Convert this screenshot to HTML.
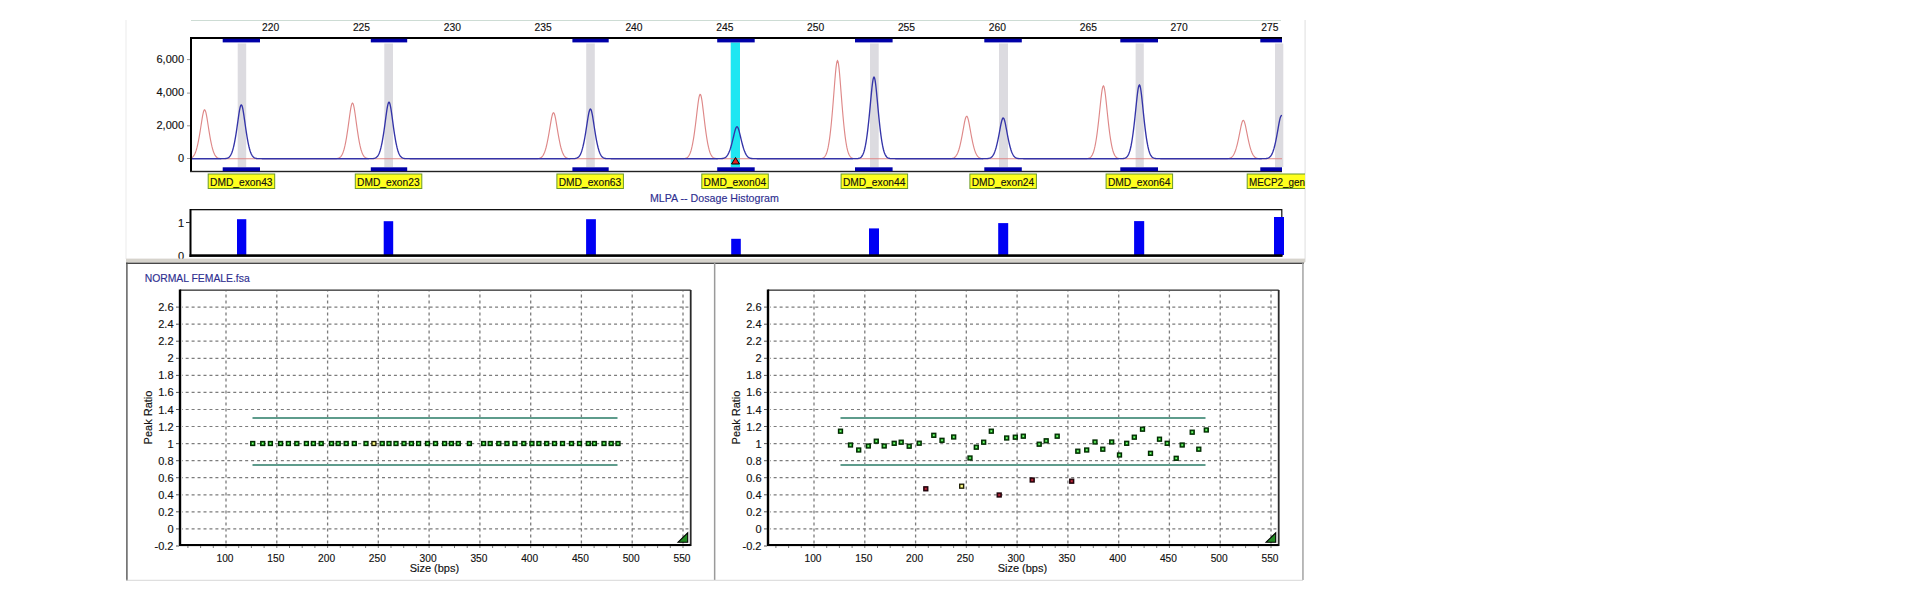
<!DOCTYPE html>
<html><head><meta charset="utf-8"><style>
html,body{margin:0;padding:0;background:#fff;width:1920px;height:600px;overflow:hidden;font-family:"Liberation Sans",sans-serif;}
svg{position:absolute;left:0;top:0;display:block}
</style></head><body>
<svg width="1920" height="600" viewBox="0 0 1920 600">
<rect x="125.5" y="20" width="1" height="239" fill="#ececec"/>
<rect x="1304.5" y="20" width="1.2" height="242" fill="#e4e4e4"/>
<rect x="191" y="20" width="1090" height="1" fill="#cddcd4"/>
<rect x="237.7" y="43.5" width="8.50" height="123.5" fill="#dcdbe0"/>
<rect x="384.3" y="43.5" width="8.70" height="123.5" fill="#dcdbe0"/>
<rect x="586.2" y="43.5" width="8.60" height="123.5" fill="#dcdbe0"/>
<rect x="870" y="43.5" width="8.70" height="123.5" fill="#dcdbe0"/>
<rect x="999" y="43.5" width="9.00" height="123.5" fill="#dcdbe0"/>
<rect x="1135.6" y="43.5" width="8.20" height="123.5" fill="#dcdbe0"/>
<rect x="1275" y="43.5" width="8.30" height="123.5" fill="#dcdbe0"/>
<rect x="730.7" y="42.4" width="9.3" height="124.8" fill="#1fe6f2"/>
<clipPath id="cp1"><rect x="191" y="39" width="1091" height="131"/></clipPath>
<g clip-path="url(#cp1)">
<path d="M191.0,158.07 L191.5,157.85 L192.0,157.56 L192.5,157.19 L193.0,156.72 L193.5,156.14 L194.0,155.43 L194.5,154.57 L195.0,153.54 L195.5,152.32 L196.0,150.90 L196.5,149.28 L197.0,147.44 L197.5,145.38 L198.0,143.11 L198.5,140.64 L199.0,137.97 L199.5,135.13 L200.0,132.13 L200.5,129.00 L201.0,125.78 L201.5,122.54 L202.0,119.38 L202.5,116.43 L203.0,113.84 L203.5,111.78 L204.0,110.41 L204.5,109.82 L205.0,110.07 L205.5,111.14 L206.0,112.95 L206.5,115.34 L207.0,118.17 L207.5,121.26 L208.0,124.48 L208.5,127.72 L209.0,130.89 L209.5,133.95 L210.0,136.86 L210.5,139.60 L211.0,142.15 L211.5,144.50 L212.0,146.64 L212.5,148.57 L213.0,150.28 L213.5,151.78 L214.0,153.07 L214.5,154.18 L215.0,155.11 L215.5,155.88 L216.0,156.51 L216.5,157.01 L217.0,157.42 L217.5,157.74 L218.0,157.99 L218.5,158.18 L219.0,158.32 L219.5,158.43 L220.0,158.51 L220.5,158.56 L221.0,158.61 L221.5,158.64 L222.0,158.66 L222.5,158.67 L223.0,158.68 L223.5,158.69 L224.0,158.69 L224.5,158.69 L225.0,158.70 L225.5,158.70 L226.0,158.70 L226.5,158.70 L227.0,158.70 L227.5,158.70 L228.0,158.70 L228.5,158.70 L229.0,158.70 L229.5,158.70 L230.0,158.70 L230.5,158.70 L231.0,158.70 L231.5,158.70 L232.0,158.70 L232.5,158.70 L233.0,158.70 L233.5,158.70 L234.0,158.70 L234.5,158.70 L235.0,158.70 L235.5,158.70 L236.0,158.70 L236.5,158.70 L237.0,158.70 L237.5,158.70 L238.0,158.70 L238.5,158.70 L239.0,158.70 L239.5,158.70 L240.0,158.70 L240.5,158.70 L241.0,158.70 L241.5,158.70 L242.0,158.70 L242.5,158.70 L243.0,158.70 L243.5,158.70 L244.0,158.70 L244.5,158.70 L245.0,158.70 L245.5,158.70 L246.0,158.70 L246.5,158.70 L247.0,158.70 L247.5,158.70 L248.0,158.70 L248.5,158.70 L249.0,158.70 L249.5,158.70 L250.0,158.70 L250.5,158.70 L251.0,158.70 L251.5,158.70 L252.0,158.70 L252.5,158.70 L253.0,158.70 L253.5,158.70 L254.0,158.70 L254.5,158.70 L255.0,158.70 L255.5,158.70 L256.0,158.70 L256.5,158.70 L257.0,158.70 L257.5,158.70 L258.0,158.70 L258.5,158.70 L259.0,158.70 L259.5,158.70 L260.0,158.70 L260.5,158.70 L261.0,158.70 L261.5,158.70 L262.0,158.70 L262.5,158.70 L263.0,158.70 L263.5,158.70 L264.0,158.70 L264.5,158.70 L265.0,158.70 L265.5,158.70 L266.0,158.70 L266.5,158.70 L267.0,158.70 L267.5,158.70 L268.0,158.70 L268.5,158.70 L269.0,158.70 L269.5,158.70 L270.0,158.70 L270.5,158.70 L271.0,158.70 L271.5,158.70 L272.0,158.70 L272.5,158.70 L273.0,158.70 L273.5,158.70 L274.0,158.70 L274.5,158.70 L275.0,158.70 L275.5,158.70 L276.0,158.70 L276.5,158.70 L277.0,158.70 L277.5,158.70 L278.0,158.70 L278.5,158.70 L279.0,158.70 L279.5,158.70 L280.0,158.70 L280.5,158.70 L281.0,158.70 L281.5,158.70 L282.0,158.70 L282.5,158.70 L283.0,158.70 L283.5,158.70 L284.0,158.70 L284.5,158.70 L285.0,158.70 L285.5,158.70 L286.0,158.70 L286.5,158.70 L287.0,158.70 L287.5,158.70 L288.0,158.70 L288.5,158.70 L289.0,158.70 L289.5,158.70 L290.0,158.70 L290.5,158.70 L291.0,158.70 L291.5,158.70 L292.0,158.70 L292.5,158.70 L293.0,158.70 L293.5,158.70 L294.0,158.70 L294.5,158.70 L295.0,158.70 L295.5,158.70 L296.0,158.70 L296.5,158.70 L297.0,158.70 L297.5,158.70 L298.0,158.70 L298.5,158.70 L299.0,158.70 L299.5,158.70 L300.0,158.70 L300.5,158.70 L301.0,158.70 L301.5,158.70 L302.0,158.70 L302.5,158.70 L303.0,158.70 L303.5,158.70 L304.0,158.70 L304.5,158.70 L305.0,158.70 L305.5,158.70 L306.0,158.70 L306.5,158.70 L307.0,158.70 L307.5,158.70 L308.0,158.70 L308.5,158.70 L309.0,158.70 L309.5,158.70 L310.0,158.70 L310.5,158.70 L311.0,158.70 L311.5,158.70 L312.0,158.70 L312.5,158.70 L313.0,158.70 L313.5,158.70 L314.0,158.70 L314.5,158.70 L315.0,158.70 L315.5,158.70 L316.0,158.70 L316.5,158.70 L317.0,158.70 L317.5,158.70 L318.0,158.70 L318.5,158.70 L319.0,158.70 L319.5,158.70 L320.0,158.70 L320.5,158.70 L321.0,158.70 L321.5,158.70 L322.0,158.70 L322.5,158.70 L323.0,158.70 L323.5,158.70 L324.0,158.70 L324.5,158.70 L325.0,158.70 L325.5,158.70 L326.0,158.70 L326.5,158.70 L327.0,158.70 L327.5,158.70 L328.0,158.70 L328.5,158.70 L329.0,158.70 L329.5,158.70 L330.0,158.70 L330.5,158.70 L331.0,158.70 L331.5,158.70 L332.0,158.70 L332.5,158.69 L333.0,158.69 L333.5,158.69 L334.0,158.68 L334.5,158.67 L335.0,158.65 L335.5,158.63 L336.0,158.60 L336.5,158.56 L337.0,158.49 L337.5,158.41 L338.0,158.29 L338.5,158.14 L339.0,157.93 L339.5,157.67 L340.0,157.32 L340.5,156.88 L341.0,156.33 L341.5,155.64 L342.0,154.80 L342.5,153.78 L343.0,152.56 L343.5,151.13 L344.0,149.47 L344.5,147.57 L345.0,145.42 L345.5,143.03 L346.0,140.40 L346.5,137.54 L347.0,134.46 L347.5,131.18 L348.0,127.73 L348.5,124.14 L349.0,120.46 L349.5,116.78 L350.0,113.22 L350.5,109.93 L351.0,107.08 L351.5,104.88 L352.0,103.48 L352.5,103.00 L353.0,103.48 L353.5,104.88 L354.0,107.08 L354.5,109.93 L355.0,113.22 L355.5,116.78 L356.0,120.46 L356.5,124.14 L357.0,127.73 L357.5,131.18 L358.0,134.46 L358.5,137.54 L359.0,140.40 L359.5,143.03 L360.0,145.42 L360.5,147.57 L361.0,149.47 L361.5,151.13 L362.0,152.56 L362.5,153.78 L363.0,154.80 L363.5,155.64 L364.0,156.33 L364.5,156.88 L365.0,157.32 L365.5,157.67 L366.0,157.93 L366.5,158.14 L367.0,158.29 L367.5,158.41 L368.0,158.49 L368.5,158.56 L369.0,158.60 L369.5,158.63 L370.0,158.65 L370.5,158.67 L371.0,158.68 L371.5,158.69 L372.0,158.69 L372.5,158.69 L373.0,158.70 L373.5,158.70 L374.0,158.70 L374.5,158.70 L375.0,158.70 L375.5,158.70 L376.0,158.70 L376.5,158.70 L377.0,158.70 L377.5,158.70 L378.0,158.70 L378.5,158.70 L379.0,158.70 L379.5,158.70 L380.0,158.70 L380.5,158.70 L381.0,158.70 L381.5,158.70 L382.0,158.70 L382.5,158.70 L383.0,158.70 L383.5,158.70 L384.0,158.70 L384.5,158.70 L385.0,158.70 L385.5,158.70 L386.0,158.70 L386.5,158.70 L387.0,158.70 L387.5,158.70 L388.0,158.70 L388.5,158.70 L389.0,158.70 L389.5,158.70 L390.0,158.70 L390.5,158.70 L391.0,158.70 L391.5,158.70 L392.0,158.70 L392.5,158.70 L393.0,158.70 L393.5,158.70 L394.0,158.70 L394.5,158.70 L395.0,158.70 L395.5,158.70 L396.0,158.70 L396.5,158.70 L397.0,158.70 L397.5,158.70 L398.0,158.70 L398.5,158.70 L399.0,158.70 L399.5,158.70 L400.0,158.70 L400.5,158.70 L401.0,158.70 L401.5,158.70 L402.0,158.70 L402.5,158.70 L403.0,158.70 L403.5,158.70 L404.0,158.70 L404.5,158.70 L405.0,158.70 L405.5,158.70 L406.0,158.70 L406.5,158.70 L407.0,158.70 L407.5,158.70 L408.0,158.70 L408.5,158.70 L409.0,158.70 L409.5,158.70 L410.0,158.70 L410.5,158.70 L411.0,158.70 L411.5,158.70 L412.0,158.70 L412.5,158.70 L413.0,158.70 L413.5,158.70 L414.0,158.70 L414.5,158.70 L415.0,158.70 L415.5,158.70 L416.0,158.70 L416.5,158.70 L417.0,158.70 L417.5,158.70 L418.0,158.70 L418.5,158.70 L419.0,158.70 L419.5,158.70 L420.0,158.70 L420.5,158.70 L421.0,158.70 L421.5,158.70 L422.0,158.70 L422.5,158.70 L423.0,158.70 L423.5,158.70 L424.0,158.70 L424.5,158.70 L425.0,158.70 L425.5,158.70 L426.0,158.70 L426.5,158.70 L427.0,158.70 L427.5,158.70 L428.0,158.70 L428.5,158.70 L429.0,158.70 L429.5,158.70 L430.0,158.70 L430.5,158.70 L431.0,158.70 L431.5,158.70 L432.0,158.70 L432.5,158.70 L433.0,158.70 L433.5,158.70 L434.0,158.70 L434.5,158.70 L435.0,158.70 L435.5,158.70 L436.0,158.70 L436.5,158.70 L437.0,158.70 L437.5,158.70 L438.0,158.70 L438.5,158.70 L439.0,158.70 L439.5,158.70 L440.0,158.70 L440.5,158.70 L441.0,158.70 L441.5,158.70 L442.0,158.70 L442.5,158.70 L443.0,158.70 L443.5,158.70 L444.0,158.70 L444.5,158.70 L445.0,158.70 L445.5,158.70 L446.0,158.70 L446.5,158.70 L447.0,158.70 L447.5,158.70 L448.0,158.70 L448.5,158.70 L449.0,158.70 L449.5,158.70 L450.0,158.70 L450.5,158.70 L451.0,158.70 L451.5,158.70 L452.0,158.70 L452.5,158.70 L453.0,158.70 L453.5,158.70 L454.0,158.70 L454.5,158.70 L455.0,158.70 L455.5,158.70 L456.0,158.70 L456.5,158.70 L457.0,158.70 L457.5,158.70 L458.0,158.70 L458.5,158.70 L459.0,158.70 L459.5,158.70 L460.0,158.70 L460.5,158.70 L461.0,158.70 L461.5,158.70 L462.0,158.70 L462.5,158.70 L463.0,158.70 L463.5,158.70 L464.0,158.70 L464.5,158.70 L465.0,158.70 L465.5,158.70 L466.0,158.70 L466.5,158.70 L467.0,158.70 L467.5,158.70 L468.0,158.70 L468.5,158.70 L469.0,158.70 L469.5,158.70 L470.0,158.70 L470.5,158.70 L471.0,158.70 L471.5,158.70 L472.0,158.70 L472.5,158.70 L473.0,158.70 L473.5,158.70 L474.0,158.70 L474.5,158.70 L475.0,158.70 L475.5,158.70 L476.0,158.70 L476.5,158.70 L477.0,158.70 L477.5,158.70 L478.0,158.70 L478.5,158.70 L479.0,158.70 L479.5,158.70 L480.0,158.70 L480.5,158.70 L481.0,158.70 L481.5,158.70 L482.0,158.70 L482.5,158.70 L483.0,158.70 L483.5,158.70 L484.0,158.70 L484.5,158.70 L485.0,158.70 L485.5,158.70 L486.0,158.70 L486.5,158.70 L487.0,158.70 L487.5,158.70 L488.0,158.70 L488.5,158.70 L489.0,158.70 L489.5,158.70 L490.0,158.70 L490.5,158.70 L491.0,158.70 L491.5,158.70 L492.0,158.70 L492.5,158.70 L493.0,158.70 L493.5,158.70 L494.0,158.70 L494.5,158.70 L495.0,158.70 L495.5,158.70 L496.0,158.70 L496.5,158.70 L497.0,158.70 L497.5,158.70 L498.0,158.70 L498.5,158.70 L499.0,158.70 L499.5,158.70 L500.0,158.70 L500.5,158.70 L501.0,158.70 L501.5,158.70 L502.0,158.70 L502.5,158.70 L503.0,158.70 L503.5,158.70 L504.0,158.70 L504.5,158.70 L505.0,158.70 L505.5,158.70 L506.0,158.70 L506.5,158.70 L507.0,158.70 L507.5,158.70 L508.0,158.70 L508.5,158.70 L509.0,158.70 L509.5,158.70 L510.0,158.70 L510.5,158.70 L511.0,158.70 L511.5,158.70 L512.0,158.70 L512.5,158.70 L513.0,158.70 L513.5,158.70 L514.0,158.70 L514.5,158.70 L515.0,158.70 L515.5,158.70 L516.0,158.70 L516.5,158.70 L517.0,158.70 L517.5,158.70 L518.0,158.70 L518.5,158.70 L519.0,158.70 L519.5,158.70 L520.0,158.70 L520.5,158.70 L521.0,158.70 L521.5,158.70 L522.0,158.70 L522.5,158.70 L523.0,158.70 L523.5,158.70 L524.0,158.70 L524.5,158.70 L525.0,158.70 L525.5,158.70 L526.0,158.70 L526.5,158.70 L527.0,158.70 L527.5,158.70 L528.0,158.70 L528.5,158.70 L529.0,158.70 L529.5,158.70 L530.0,158.70 L530.5,158.70 L531.0,158.70 L531.5,158.70 L532.0,158.70 L532.5,158.70 L533.0,158.70 L533.5,158.70 L534.0,158.69 L534.5,158.69 L535.0,158.68 L535.5,158.67 L536.0,158.66 L536.5,158.64 L537.0,158.62 L537.5,158.58 L538.0,158.53 L538.5,158.46 L539.0,158.36 L539.5,158.24 L540.0,158.07 L540.5,157.85 L541.0,157.56 L541.5,157.20 L542.0,156.74 L542.5,156.17 L543.0,155.48 L543.5,154.63 L544.0,153.63 L544.5,152.45 L545.0,151.08 L545.5,149.51 L546.0,147.73 L546.5,145.76 L547.0,143.59 L547.5,141.22 L548.0,138.68 L548.5,135.97 L549.0,133.12 L549.5,130.16 L550.0,127.12 L550.5,124.08 L551.0,121.14 L551.5,118.42 L552.0,116.07 L552.5,114.25 L553.0,113.10 L553.5,112.70 L554.0,113.10 L554.5,114.25 L555.0,116.07 L555.5,118.42 L556.0,121.14 L556.5,124.08 L557.0,127.12 L557.5,130.16 L558.0,133.12 L558.5,135.97 L559.0,138.68 L559.5,141.22 L560.0,143.59 L560.5,145.76 L561.0,147.73 L561.5,149.51 L562.0,151.08 L562.5,152.45 L563.0,153.63 L563.5,154.63 L564.0,155.48 L564.5,156.17 L565.0,156.74 L565.5,157.20 L566.0,157.56 L566.5,157.85 L567.0,158.07 L567.5,158.24 L568.0,158.36 L568.5,158.46 L569.0,158.53 L569.5,158.58 L570.0,158.62 L570.5,158.64 L571.0,158.66 L571.5,158.67 L572.0,158.68 L572.5,158.69 L573.0,158.69 L573.5,158.70 L574.0,158.70 L574.5,158.70 L575.0,158.70 L575.5,158.70 L576.0,158.70 L576.5,158.70 L577.0,158.70 L577.5,158.70 L578.0,158.70 L578.5,158.70 L579.0,158.70 L579.5,158.70 L580.0,158.70 L580.5,158.70 L581.0,158.70 L581.5,158.70 L582.0,158.70 L582.5,158.70 L583.0,158.70 L583.5,158.70 L584.0,158.70 L584.5,158.70 L585.0,158.70 L585.5,158.70 L586.0,158.70 L586.5,158.70 L587.0,158.70 L587.5,158.70 L588.0,158.70 L588.5,158.70 L589.0,158.70 L589.5,158.70 L590.0,158.70 L590.5,158.70 L591.0,158.70 L591.5,158.70 L592.0,158.70 L592.5,158.70 L593.0,158.70 L593.5,158.70 L594.0,158.70 L594.5,158.70 L595.0,158.70 L595.5,158.70 L596.0,158.70 L596.5,158.70 L597.0,158.70 L597.5,158.70 L598.0,158.70 L598.5,158.70 L599.0,158.70 L599.5,158.70 L600.0,158.70 L600.5,158.70 L601.0,158.70 L601.5,158.70 L602.0,158.70 L602.5,158.70 L603.0,158.70 L603.5,158.70 L604.0,158.70 L604.5,158.70 L605.0,158.70 L605.5,158.70 L606.0,158.70 L606.5,158.70 L607.0,158.70 L607.5,158.70 L608.0,158.70 L608.5,158.70 L609.0,158.70 L609.5,158.70 L610.0,158.70 L610.5,158.70 L611.0,158.70 L611.5,158.70 L612.0,158.70 L612.5,158.70 L613.0,158.70 L613.5,158.70 L614.0,158.70 L614.5,158.70 L615.0,158.70 L615.5,158.70 L616.0,158.70 L616.5,158.70 L617.0,158.70 L617.5,158.70 L618.0,158.70 L618.5,158.70 L619.0,158.70 L619.5,158.70 L620.0,158.70 L620.5,158.70 L621.0,158.70 L621.5,158.70 L622.0,158.70 L622.5,158.70 L623.0,158.70 L623.5,158.70 L624.0,158.70 L624.5,158.70 L625.0,158.70 L625.5,158.70 L626.0,158.70 L626.5,158.70 L627.0,158.70 L627.5,158.70 L628.0,158.70 L628.5,158.70 L629.0,158.70 L629.5,158.70 L630.0,158.70 L630.5,158.70 L631.0,158.70 L631.5,158.70 L632.0,158.70 L632.5,158.70 L633.0,158.70 L633.5,158.70 L634.0,158.70 L634.5,158.70 L635.0,158.70 L635.5,158.70 L636.0,158.70 L636.5,158.70 L637.0,158.70 L637.5,158.70 L638.0,158.70 L638.5,158.70 L639.0,158.70 L639.5,158.70 L640.0,158.70 L640.5,158.70 L641.0,158.70 L641.5,158.70 L642.0,158.70 L642.5,158.70 L643.0,158.70 L643.5,158.70 L644.0,158.70 L644.5,158.70 L645.0,158.70 L645.5,158.70 L646.0,158.70 L646.5,158.70 L647.0,158.70 L647.5,158.70 L648.0,158.70 L648.5,158.70 L649.0,158.70 L649.5,158.70 L650.0,158.70 L650.5,158.70 L651.0,158.70 L651.5,158.70 L652.0,158.70 L652.5,158.70 L653.0,158.70 L653.5,158.70 L654.0,158.70 L654.5,158.70 L655.0,158.70 L655.5,158.70 L656.0,158.70 L656.5,158.70 L657.0,158.70 L657.5,158.70 L658.0,158.70 L658.5,158.70 L659.0,158.70 L659.5,158.70 L660.0,158.70 L660.5,158.70 L661.0,158.70 L661.5,158.70 L662.0,158.70 L662.5,158.70 L663.0,158.70 L663.5,158.70 L664.0,158.70 L664.5,158.70 L665.0,158.70 L665.5,158.70 L666.0,158.70 L666.5,158.70 L667.0,158.70 L667.5,158.70 L668.0,158.70 L668.5,158.70 L669.0,158.70 L669.5,158.70 L670.0,158.70 L670.5,158.70 L671.0,158.70 L671.5,158.70 L672.0,158.70 L672.5,158.70 L673.0,158.70 L673.5,158.70 L674.0,158.70 L674.5,158.70 L675.0,158.70 L675.5,158.70 L676.0,158.70 L676.5,158.70 L677.0,158.70 L677.5,158.70 L678.0,158.70 L678.5,158.70 L679.0,158.70 L679.5,158.70 L680.0,158.69 L680.5,158.69 L681.0,158.69 L681.5,158.68 L682.0,158.67 L682.5,158.65 L683.0,158.63 L683.5,158.60 L684.0,158.56 L684.5,158.49 L685.0,158.41 L685.5,158.29 L686.0,158.13 L686.5,157.92 L687.0,157.64 L687.5,157.28 L688.0,156.82 L688.5,156.23 L689.0,155.50 L689.5,154.60 L690.0,153.50 L690.5,152.19 L691.0,150.64 L691.5,148.83 L692.0,146.74 L692.5,144.37 L693.0,141.72 L693.5,138.79 L694.0,135.59 L694.5,132.13 L695.0,128.43 L695.5,124.51 L696.0,120.42 L696.5,116.20 L697.0,111.93 L697.5,107.74 L698.0,103.78 L698.5,100.26 L699.0,97.39 L699.5,95.38 L700.0,94.39 L700.5,94.50 L701.0,95.71 L701.5,97.90 L702.0,100.92 L702.5,104.54 L703.0,108.56 L703.5,112.78 L704.0,117.05 L704.5,121.25 L705.0,125.31 L705.5,129.18 L706.0,132.84 L706.5,136.25 L707.0,139.40 L707.5,142.28 L708.0,144.87 L708.5,147.18 L709.0,149.21 L709.5,150.97 L710.0,152.47 L710.5,153.74 L711.0,154.79 L711.5,155.66 L712.0,156.36 L712.5,156.92 L713.0,157.36 L713.5,157.70 L714.0,157.97 L714.5,158.17 L715.0,158.32 L715.5,158.43 L716.0,158.51 L716.5,158.57 L717.0,158.61 L717.5,158.64 L718.0,158.66 L718.5,158.67 L719.0,158.68 L719.5,158.69 L720.0,158.69 L720.5,158.70 L721.0,158.70 L721.5,158.70 L722.0,158.70 L722.5,158.70 L723.0,158.70 L723.5,158.70 L724.0,158.70 L724.5,158.70 L725.0,158.70 L725.5,158.70 L726.0,158.70 L726.5,158.70 L727.0,158.70 L727.5,158.70 L728.0,158.70 L728.5,158.70 L729.0,158.70 L729.5,158.70 L730.0,158.70 L730.5,158.70 L731.0,158.70 L731.5,158.70 L732.0,158.70 L732.5,158.70 L733.0,158.70 L733.5,158.70 L734.0,158.70 L734.5,158.70 L735.0,158.70 L735.5,158.70 L736.0,158.70 L736.5,158.70 L737.0,158.70 L737.5,158.70 L738.0,158.70 L738.5,158.70 L739.0,158.70 L739.5,158.70 L740.0,158.70 L740.5,158.70 L741.0,158.70 L741.5,158.70 L742.0,158.70 L742.5,158.70 L743.0,158.70 L743.5,158.70 L744.0,158.70 L744.5,158.70 L745.0,158.70 L745.5,158.70 L746.0,158.70 L746.5,158.70 L747.0,158.70 L747.5,158.70 L748.0,158.70 L748.5,158.70 L749.0,158.70 L749.5,158.70 L750.0,158.70 L750.5,158.70 L751.0,158.70 L751.5,158.70 L752.0,158.70 L752.5,158.70 L753.0,158.70 L753.5,158.70 L754.0,158.70 L754.5,158.70 L755.0,158.70 L755.5,158.70 L756.0,158.70 L756.5,158.70 L757.0,158.70 L757.5,158.70 L758.0,158.70 L758.5,158.70 L759.0,158.70 L759.5,158.70 L760.0,158.70 L760.5,158.70 L761.0,158.70 L761.5,158.70 L762.0,158.70 L762.5,158.70 L763.0,158.70 L763.5,158.70 L764.0,158.70 L764.5,158.70 L765.0,158.70 L765.5,158.70 L766.0,158.70 L766.5,158.70 L767.0,158.70 L767.5,158.70 L768.0,158.70 L768.5,158.70 L769.0,158.70 L769.5,158.70 L770.0,158.70 L770.5,158.70 L771.0,158.70 L771.5,158.70 L772.0,158.70 L772.5,158.70 L773.0,158.70 L773.5,158.70 L774.0,158.70 L774.5,158.70 L775.0,158.70 L775.5,158.70 L776.0,158.70 L776.5,158.70 L777.0,158.70 L777.5,158.70 L778.0,158.70 L778.5,158.70 L779.0,158.70 L779.5,158.70 L780.0,158.70 L780.5,158.70 L781.0,158.70 L781.5,158.70 L782.0,158.70 L782.5,158.70 L783.0,158.70 L783.5,158.70 L784.0,158.70 L784.5,158.70 L785.0,158.70 L785.5,158.70 L786.0,158.70 L786.5,158.70 L787.0,158.70 L787.5,158.70 L788.0,158.70 L788.5,158.70 L789.0,158.70 L789.5,158.70 L790.0,158.70 L790.5,158.70 L791.0,158.70 L791.5,158.70 L792.0,158.70 L792.5,158.70 L793.0,158.70 L793.5,158.70 L794.0,158.70 L794.5,158.70 L795.0,158.70 L795.5,158.70 L796.0,158.70 L796.5,158.70 L797.0,158.70 L797.5,158.70 L798.0,158.70 L798.5,158.70 L799.0,158.70 L799.5,158.70 L800.0,158.70 L800.5,158.70 L801.0,158.70 L801.5,158.70 L802.0,158.70 L802.5,158.70 L803.0,158.70 L803.5,158.70 L804.0,158.70 L804.5,158.70 L805.0,158.70 L805.5,158.70 L806.0,158.70 L806.5,158.70 L807.0,158.70 L807.5,158.70 L808.0,158.70 L808.5,158.70 L809.0,158.70 L809.5,158.70 L810.0,158.70 L810.5,158.70 L811.0,158.70 L811.5,158.70 L812.0,158.70 L812.5,158.70 L813.0,158.70 L813.5,158.70 L814.0,158.70 L814.5,158.70 L815.0,158.70 L815.5,158.70 L816.0,158.70 L816.5,158.70 L817.0,158.69 L817.5,158.69 L818.0,158.68 L818.5,158.68 L819.0,158.66 L819.5,158.65 L820.0,158.62 L820.5,158.58 L821.0,158.52 L821.5,158.45 L822.0,158.34 L822.5,158.19 L823.0,157.99 L823.5,157.71 L824.0,157.35 L824.5,156.88 L825.0,156.28 L825.5,155.50 L826.0,154.53 L826.5,153.31 L827.0,151.83 L827.5,150.04 L828.0,147.90 L828.5,145.38 L829.0,142.46 L829.5,139.11 L830.0,135.34 L830.5,131.13 L831.0,126.50 L831.5,121.47 L832.0,116.05 L832.5,110.29 L833.0,104.21 L833.5,97.89 L834.0,91.42 L834.5,84.95 L835.0,78.68 L835.5,72.89 L836.0,67.88 L836.5,64.01 L837.0,61.54 L837.5,60.70 L838.0,61.54 L838.5,64.01 L839.0,67.88 L839.5,72.89 L840.0,78.68 L840.5,84.95 L841.0,91.42 L841.5,97.89 L842.0,104.21 L842.5,110.29 L843.0,116.05 L843.5,121.47 L844.0,126.50 L844.5,131.13 L845.0,135.34 L845.5,139.11 L846.0,142.46 L846.5,145.38 L847.0,147.90 L847.5,150.04 L848.0,151.83 L848.5,153.31 L849.0,154.53 L849.5,155.50 L850.0,156.28 L850.5,156.88 L851.0,157.35 L851.5,157.71 L852.0,157.99 L852.5,158.19 L853.0,158.34 L853.5,158.45 L854.0,158.52 L854.5,158.58 L855.0,158.62 L855.5,158.65 L856.0,158.66 L856.5,158.68 L857.0,158.68 L857.5,158.69 L858.0,158.69 L858.5,158.70 L859.0,158.70 L859.5,158.70 L860.0,158.70 L860.5,158.70 L861.0,158.70 L861.5,158.70 L862.0,158.70 L862.5,158.70 L863.0,158.70 L863.5,158.70 L864.0,158.70 L864.5,158.70 L865.0,158.70 L865.5,158.70 L866.0,158.70 L866.5,158.70 L867.0,158.70 L867.5,158.70 L868.0,158.70 L868.5,158.70 L869.0,158.70 L869.5,158.70 L870.0,158.70 L870.5,158.70 L871.0,158.70 L871.5,158.70 L872.0,158.70 L872.5,158.70 L873.0,158.70 L873.5,158.70 L874.0,158.70 L874.5,158.70 L875.0,158.70 L875.5,158.70 L876.0,158.70 L876.5,158.70 L877.0,158.70 L877.5,158.70 L878.0,158.70 L878.5,158.70 L879.0,158.70 L879.5,158.70 L880.0,158.70 L880.5,158.70 L881.0,158.70 L881.5,158.70 L882.0,158.70 L882.5,158.70 L883.0,158.70 L883.5,158.70 L884.0,158.70 L884.5,158.70 L885.0,158.70 L885.5,158.70 L886.0,158.70 L886.5,158.70 L887.0,158.70 L887.5,158.70 L888.0,158.70 L888.5,158.70 L889.0,158.70 L889.5,158.70 L890.0,158.70 L890.5,158.70 L891.0,158.70 L891.5,158.70 L892.0,158.70 L892.5,158.70 L893.0,158.70 L893.5,158.70 L894.0,158.70 L894.5,158.70 L895.0,158.70 L895.5,158.70 L896.0,158.70 L896.5,158.70 L897.0,158.70 L897.5,158.70 L898.0,158.70 L898.5,158.70 L899.0,158.70 L899.5,158.70 L900.0,158.70 L900.5,158.70 L901.0,158.70 L901.5,158.70 L902.0,158.70 L902.5,158.70 L903.0,158.70 L903.5,158.70 L904.0,158.70 L904.5,158.70 L905.0,158.70 L905.5,158.70 L906.0,158.70 L906.5,158.70 L907.0,158.70 L907.5,158.70 L908.0,158.70 L908.5,158.70 L909.0,158.70 L909.5,158.70 L910.0,158.70 L910.5,158.70 L911.0,158.70 L911.5,158.70 L912.0,158.70 L912.5,158.70 L913.0,158.70 L913.5,158.70 L914.0,158.70 L914.5,158.70 L915.0,158.70 L915.5,158.70 L916.0,158.70 L916.5,158.70 L917.0,158.70 L917.5,158.70 L918.0,158.70 L918.5,158.70 L919.0,158.70 L919.5,158.70 L920.0,158.70 L920.5,158.70 L921.0,158.70 L921.5,158.70 L922.0,158.70 L922.5,158.70 L923.0,158.70 L923.5,158.70 L924.0,158.70 L924.5,158.70 L925.0,158.70 L925.5,158.70 L926.0,158.70 L926.5,158.70 L927.0,158.70 L927.5,158.70 L928.0,158.70 L928.5,158.70 L929.0,158.70 L929.5,158.70 L930.0,158.70 L930.5,158.70 L931.0,158.70 L931.5,158.70 L932.0,158.70 L932.5,158.70 L933.0,158.70 L933.5,158.70 L934.0,158.70 L934.5,158.70 L935.0,158.70 L935.5,158.70 L936.0,158.70 L936.5,158.70 L937.0,158.70 L937.5,158.70 L938.0,158.70 L938.5,158.70 L939.0,158.70 L939.5,158.70 L940.0,158.70 L940.5,158.70 L941.0,158.70 L941.5,158.70 L942.0,158.70 L942.5,158.70 L943.0,158.70 L943.5,158.70 L944.0,158.70 L944.5,158.70 L945.0,158.70 L945.5,158.70 L946.0,158.70 L946.5,158.70 L947.0,158.69 L947.5,158.69 L948.0,158.69 L948.5,158.68 L949.0,158.67 L949.5,158.66 L950.0,158.63 L950.5,158.60 L951.0,158.56 L951.5,158.51 L952.0,158.43 L952.5,158.32 L953.0,158.18 L953.5,158.00 L954.0,157.76 L954.5,157.46 L955.0,157.07 L955.5,156.59 L956.0,155.99 L956.5,155.27 L957.0,154.41 L957.5,153.38 L958.0,152.18 L958.5,150.81 L959.0,149.25 L959.5,147.50 L960.0,145.56 L960.5,143.45 L961.0,141.16 L961.5,138.72 L962.0,136.14 L962.5,133.44 L963.0,130.65 L963.5,127.84 L964.0,125.07 L964.5,122.46 L965.0,120.13 L965.5,118.24 L966.0,116.91 L966.5,116.26 L967.0,116.33 L967.5,117.13 L968.0,118.58 L968.5,120.57 L969.0,122.96 L969.5,125.61 L970.0,128.40 L970.5,131.21 L971.0,133.99 L971.5,136.67 L972.0,139.22 L972.5,141.63 L973.0,143.88 L973.5,145.96 L974.0,147.86 L974.5,149.57 L975.0,151.10 L975.5,152.44 L976.0,153.60 L976.5,154.59 L977.0,155.43 L977.5,156.12 L978.0,156.69 L978.5,157.15 L979.0,157.52 L979.5,157.81 L980.0,158.04 L980.5,158.21 L981.0,158.35 L981.5,158.45 L982.0,158.52 L982.5,158.57 L983.0,158.61 L983.5,158.64 L984.0,158.66 L984.5,158.67 L985.0,158.68 L985.5,158.69 L986.0,158.69 L986.5,158.69 L987.0,158.70 L987.5,158.70 L988.0,158.70 L988.5,158.70 L989.0,158.70 L989.5,158.70 L990.0,158.70 L990.5,158.70 L991.0,158.70 L991.5,158.70 L992.0,158.70 L992.5,158.70 L993.0,158.70 L993.5,158.70 L994.0,158.70 L994.5,158.70 L995.0,158.70 L995.5,158.70 L996.0,158.70 L996.5,158.70 L997.0,158.70 L997.5,158.70 L998.0,158.70 L998.5,158.70 L999.0,158.70 L999.5,158.70 L1000.0,158.70 L1000.5,158.70 L1001.0,158.70 L1001.5,158.70 L1002.0,158.70 L1002.5,158.70 L1003.0,158.70 L1003.5,158.70 L1004.0,158.70 L1004.5,158.70 L1005.0,158.70 L1005.5,158.70 L1006.0,158.70 L1006.5,158.70 L1007.0,158.70 L1007.5,158.70 L1008.0,158.70 L1008.5,158.70 L1009.0,158.70 L1009.5,158.70 L1010.0,158.70 L1010.5,158.70 L1011.0,158.70 L1011.5,158.70 L1012.0,158.70 L1012.5,158.70 L1013.0,158.70 L1013.5,158.70 L1014.0,158.70 L1014.5,158.70 L1015.0,158.70 L1015.5,158.70 L1016.0,158.70 L1016.5,158.70 L1017.0,158.70 L1017.5,158.70 L1018.0,158.70 L1018.5,158.70 L1019.0,158.70 L1019.5,158.70 L1020.0,158.70 L1020.5,158.70 L1021.0,158.70 L1021.5,158.70 L1022.0,158.70 L1022.5,158.70 L1023.0,158.70 L1023.5,158.70 L1024.0,158.70 L1024.5,158.70 L1025.0,158.70 L1025.5,158.70 L1026.0,158.70 L1026.5,158.70 L1027.0,158.70 L1027.5,158.70 L1028.0,158.70 L1028.5,158.70 L1029.0,158.70 L1029.5,158.70 L1030.0,158.70 L1030.5,158.70 L1031.0,158.70 L1031.5,158.70 L1032.0,158.70 L1032.5,158.70 L1033.0,158.70 L1033.5,158.70 L1034.0,158.70 L1034.5,158.70 L1035.0,158.70 L1035.5,158.70 L1036.0,158.70 L1036.5,158.70 L1037.0,158.70 L1037.5,158.70 L1038.0,158.70 L1038.5,158.70 L1039.0,158.70 L1039.5,158.70 L1040.0,158.70 L1040.5,158.70 L1041.0,158.70 L1041.5,158.70 L1042.0,158.70 L1042.5,158.70 L1043.0,158.70 L1043.5,158.70 L1044.0,158.70 L1044.5,158.70 L1045.0,158.70 L1045.5,158.70 L1046.0,158.70 L1046.5,158.70 L1047.0,158.70 L1047.5,158.70 L1048.0,158.70 L1048.5,158.70 L1049.0,158.70 L1049.5,158.70 L1050.0,158.70 L1050.5,158.70 L1051.0,158.70 L1051.5,158.70 L1052.0,158.70 L1052.5,158.70 L1053.0,158.70 L1053.5,158.70 L1054.0,158.70 L1054.5,158.70 L1055.0,158.70 L1055.5,158.70 L1056.0,158.70 L1056.5,158.70 L1057.0,158.70 L1057.5,158.70 L1058.0,158.70 L1058.5,158.70 L1059.0,158.70 L1059.5,158.70 L1060.0,158.70 L1060.5,158.70 L1061.0,158.70 L1061.5,158.70 L1062.0,158.70 L1062.5,158.70 L1063.0,158.70 L1063.5,158.70 L1064.0,158.70 L1064.5,158.70 L1065.0,158.70 L1065.5,158.70 L1066.0,158.70 L1066.5,158.70 L1067.0,158.70 L1067.5,158.70 L1068.0,158.70 L1068.5,158.70 L1069.0,158.70 L1069.5,158.70 L1070.0,158.70 L1070.5,158.70 L1071.0,158.70 L1071.5,158.70 L1072.0,158.70 L1072.5,158.70 L1073.0,158.70 L1073.5,158.70 L1074.0,158.70 L1074.5,158.70 L1075.0,158.70 L1075.5,158.70 L1076.0,158.70 L1076.5,158.70 L1077.0,158.70 L1077.5,158.70 L1078.0,158.70 L1078.5,158.70 L1079.0,158.70 L1079.5,158.70 L1080.0,158.70 L1080.5,158.70 L1081.0,158.70 L1081.5,158.70 L1082.0,158.70 L1082.5,158.70 L1083.0,158.69 L1083.5,158.69 L1084.0,158.69 L1084.5,158.68 L1085.0,158.67 L1085.5,158.66 L1086.0,158.63 L1086.5,158.60 L1087.0,158.56 L1087.5,158.50 L1088.0,158.41 L1088.5,158.29 L1089.0,158.13 L1089.5,157.92 L1090.0,157.64 L1090.5,157.27 L1091.0,156.79 L1091.5,156.19 L1092.0,155.43 L1092.5,154.50 L1093.0,153.35 L1093.5,151.97 L1094.0,150.32 L1094.5,148.40 L1095.0,146.16 L1095.5,143.61 L1096.0,140.75 L1096.5,137.56 L1097.0,134.06 L1097.5,130.26 L1098.0,126.18 L1098.5,121.85 L1099.0,117.30 L1099.5,112.57 L1100.0,107.76 L1100.5,102.97 L1101.0,98.36 L1101.5,94.15 L1102.0,90.59 L1102.5,87.90 L1103.0,86.30 L1103.5,85.93 L1104.0,86.80 L1104.5,88.85 L1105.0,91.92 L1105.5,95.77 L1106.0,100.17 L1106.5,104.87 L1107.0,109.69 L1107.5,114.48 L1108.0,119.14 L1108.5,123.61 L1109.0,127.84 L1109.5,131.81 L1110.0,135.49 L1110.5,138.87 L1111.0,141.93 L1111.5,144.67 L1112.0,147.09 L1112.5,149.20 L1113.0,151.01 L1113.5,152.55 L1114.0,153.84 L1114.5,154.89 L1115.0,155.76 L1115.5,156.45 L1116.0,157.00 L1116.5,157.43 L1117.0,157.76 L1117.5,158.01 L1118.0,158.20 L1118.5,158.35 L1119.0,158.45 L1119.5,158.52 L1120.0,158.58 L1120.5,158.62 L1121.0,158.64 L1121.5,158.66 L1122.0,158.68 L1122.5,158.68 L1123.0,158.69 L1123.5,158.69 L1124.0,158.70 L1124.5,158.70 L1125.0,158.70 L1125.5,158.70 L1126.0,158.70 L1126.5,158.70 L1127.0,158.70 L1127.5,158.70 L1128.0,158.70 L1128.5,158.70 L1129.0,158.70 L1129.5,158.70 L1130.0,158.70 L1130.5,158.70 L1131.0,158.70 L1131.5,158.70 L1132.0,158.70 L1132.5,158.70 L1133.0,158.70 L1133.5,158.70 L1134.0,158.70 L1134.5,158.70 L1135.0,158.70 L1135.5,158.70 L1136.0,158.70 L1136.5,158.70 L1137.0,158.70 L1137.5,158.70 L1138.0,158.70 L1138.5,158.70 L1139.0,158.70 L1139.5,158.70 L1140.0,158.70 L1140.5,158.70 L1141.0,158.70 L1141.5,158.70 L1142.0,158.70 L1142.5,158.70 L1143.0,158.70 L1143.5,158.70 L1144.0,158.70 L1144.5,158.70 L1145.0,158.70 L1145.5,158.70 L1146.0,158.70 L1146.5,158.70 L1147.0,158.70 L1147.5,158.70 L1148.0,158.70 L1148.5,158.70 L1149.0,158.70 L1149.5,158.70 L1150.0,158.70 L1150.5,158.70 L1151.0,158.70 L1151.5,158.70 L1152.0,158.70 L1152.5,158.70 L1153.0,158.70 L1153.5,158.70 L1154.0,158.70 L1154.5,158.70 L1155.0,158.70 L1155.5,158.70 L1156.0,158.70 L1156.5,158.70 L1157.0,158.70 L1157.5,158.70 L1158.0,158.70 L1158.5,158.70 L1159.0,158.70 L1159.5,158.70 L1160.0,158.70 L1160.5,158.70 L1161.0,158.70 L1161.5,158.70 L1162.0,158.70 L1162.5,158.70 L1163.0,158.70 L1163.5,158.70 L1164.0,158.70 L1164.5,158.70 L1165.0,158.70 L1165.5,158.70 L1166.0,158.70 L1166.5,158.70 L1167.0,158.70 L1167.5,158.70 L1168.0,158.70 L1168.5,158.70 L1169.0,158.70 L1169.5,158.70 L1170.0,158.70 L1170.5,158.70 L1171.0,158.70 L1171.5,158.70 L1172.0,158.70 L1172.5,158.70 L1173.0,158.70 L1173.5,158.70 L1174.0,158.70 L1174.5,158.70 L1175.0,158.70 L1175.5,158.70 L1176.0,158.70 L1176.5,158.70 L1177.0,158.70 L1177.5,158.70 L1178.0,158.70 L1178.5,158.70 L1179.0,158.70 L1179.5,158.70 L1180.0,158.70 L1180.5,158.70 L1181.0,158.70 L1181.5,158.70 L1182.0,158.70 L1182.5,158.70 L1183.0,158.70 L1183.5,158.70 L1184.0,158.70 L1184.5,158.70 L1185.0,158.70 L1185.5,158.70 L1186.0,158.70 L1186.5,158.70 L1187.0,158.70 L1187.5,158.70 L1188.0,158.70 L1188.5,158.70 L1189.0,158.70 L1189.5,158.70 L1190.0,158.70 L1190.5,158.70 L1191.0,158.70 L1191.5,158.70 L1192.0,158.70 L1192.5,158.70 L1193.0,158.70 L1193.5,158.70 L1194.0,158.70 L1194.5,158.70 L1195.0,158.70 L1195.5,158.70 L1196.0,158.70 L1196.5,158.70 L1197.0,158.70 L1197.5,158.70 L1198.0,158.70 L1198.5,158.70 L1199.0,158.70 L1199.5,158.70 L1200.0,158.70 L1200.5,158.70 L1201.0,158.70 L1201.5,158.70 L1202.0,158.70 L1202.5,158.70 L1203.0,158.70 L1203.5,158.70 L1204.0,158.70 L1204.5,158.70 L1205.0,158.70 L1205.5,158.70 L1206.0,158.70 L1206.5,158.70 L1207.0,158.70 L1207.5,158.70 L1208.0,158.70 L1208.5,158.70 L1209.0,158.70 L1209.5,158.70 L1210.0,158.70 L1210.5,158.70 L1211.0,158.70 L1211.5,158.70 L1212.0,158.70 L1212.5,158.70 L1213.0,158.70 L1213.5,158.70 L1214.0,158.70 L1214.5,158.70 L1215.0,158.70 L1215.5,158.70 L1216.0,158.70 L1216.5,158.70 L1217.0,158.70 L1217.5,158.70 L1218.0,158.70 L1218.5,158.70 L1219.0,158.70 L1219.5,158.70 L1220.0,158.70 L1220.5,158.70 L1221.0,158.70 L1221.5,158.70 L1222.0,158.70 L1222.5,158.70 L1223.0,158.70 L1223.5,158.70 L1224.0,158.69 L1224.5,158.69 L1225.0,158.68 L1225.5,158.67 L1226.0,158.66 L1226.5,158.65 L1227.0,158.62 L1227.5,158.59 L1228.0,158.54 L1228.5,158.47 L1229.0,158.38 L1229.5,158.26 L1230.0,158.10 L1230.5,157.90 L1231.0,157.64 L1231.5,157.30 L1232.0,156.89 L1232.5,156.37 L1233.0,155.74 L1233.5,154.99 L1234.0,154.09 L1234.5,153.04 L1235.0,151.83 L1235.5,150.45 L1236.0,148.91 L1236.5,147.19 L1237.0,145.31 L1237.5,143.28 L1238.0,141.10 L1238.5,138.79 L1239.0,136.37 L1239.5,133.86 L1240.0,131.32 L1240.5,128.80 L1241.0,126.41 L1241.5,124.25 L1242.0,122.45 L1242.5,121.14 L1243.0,120.42 L1243.5,120.35 L1244.0,120.94 L1244.5,122.14 L1245.0,123.85 L1245.5,125.95 L1246.0,128.31 L1246.5,130.81 L1247.0,133.36 L1247.5,135.87 L1248.0,138.31 L1248.5,140.65 L1249.0,142.85 L1249.5,144.92 L1250.0,146.83 L1250.5,148.58 L1251.0,150.16 L1251.5,151.57 L1252.0,152.81 L1252.5,153.89 L1253.0,154.82 L1253.5,155.60 L1254.0,156.25 L1254.5,156.79 L1255.0,157.23 L1255.5,157.58 L1256.0,157.85 L1256.5,158.07 L1257.0,158.23 L1257.5,158.36 L1258.0,158.45 L1258.5,158.53 L1259.0,158.58 L1259.5,158.61 L1260.0,158.64 L1260.5,158.66 L1261.0,158.67 L1261.5,158.68 L1262.0,158.69 L1262.5,158.69 L1263.0,158.70 L1263.5,158.70 L1264.0,158.70 L1264.5,158.70 L1265.0,158.70 L1265.5,158.70 L1266.0,158.70 L1266.5,158.70 L1267.0,158.70 L1267.5,158.70 L1268.0,158.70 L1268.5,158.70 L1269.0,158.70 L1269.5,158.70 L1270.0,158.70 L1270.5,158.70 L1271.0,158.70 L1271.5,158.70 L1272.0,158.70 L1272.5,158.70 L1273.0,158.70 L1273.5,158.70 L1274.0,158.70 L1274.5,158.70 L1275.0,158.70 L1275.5,158.70 L1276.0,158.70 L1276.5,158.70 L1277.0,158.70 L1277.5,158.70 L1278.0,158.70 L1278.5,158.70 L1279.0,158.70 L1279.5,158.70 L1280.0,158.70 L1280.5,158.70 L1281.0,158.70 L1281.5,158.70 L1282.0,158.70" fill="none" stroke="#de8888" stroke-width="1.15"/>
<path d="M191.0,158.70 L191.5,158.70 L192.0,158.70 L192.5,158.70 L193.0,158.70 L193.5,158.70 L194.0,158.70 L194.5,158.70 L195.0,158.70 L195.5,158.70 L196.0,158.70 L196.5,158.70 L197.0,158.70 L197.5,158.70 L198.0,158.70 L198.5,158.70 L199.0,158.70 L199.5,158.70 L200.0,158.70 L200.5,158.70 L201.0,158.70 L201.5,158.70 L202.0,158.70 L202.5,158.70 L203.0,158.70 L203.5,158.70 L204.0,158.70 L204.5,158.70 L205.0,158.70 L205.5,158.70 L206.0,158.70 L206.5,158.70 L207.0,158.70 L207.5,158.70 L208.0,158.70 L208.5,158.70 L209.0,158.70 L209.5,158.70 L210.0,158.70 L210.5,158.70 L211.0,158.70 L211.5,158.70 L212.0,158.70 L212.5,158.70 L213.0,158.70 L213.5,158.70 L214.0,158.70 L214.5,158.70 L215.0,158.70 L215.5,158.70 L216.0,158.70 L216.5,158.70 L217.0,158.70 L217.5,158.70 L218.0,158.70 L218.5,158.70 L219.0,158.70 L219.5,158.70 L220.0,158.70 L220.5,158.70 L221.0,158.70 L221.5,158.69 L222.0,158.69 L222.5,158.68 L223.0,158.68 L223.5,158.66 L224.0,158.65 L224.5,158.62 L225.0,158.59 L225.5,158.54 L226.0,158.47 L226.5,158.38 L227.0,158.25 L227.5,158.09 L228.0,157.87 L228.5,157.58 L229.0,157.21 L229.5,156.74 L230.0,156.16 L230.5,155.44 L231.0,154.56 L231.5,153.50 L232.0,152.24 L232.5,150.77 L233.0,149.08 L233.5,147.15 L234.0,144.98 L234.5,142.58 L235.0,139.94 L235.5,137.09 L236.0,134.04 L236.5,130.81 L237.0,127.41 L237.5,123.90 L238.0,120.34 L238.5,116.82 L239.0,113.46 L239.5,110.43 L240.0,107.91 L240.5,106.07 L241.0,105.07 L241.5,104.97 L242.0,105.80 L242.5,107.48 L243.0,109.88 L243.5,112.82 L244.0,116.13 L244.5,119.63 L245.0,123.19 L245.5,126.72 L246.0,130.14 L246.5,133.41 L247.0,136.50 L247.5,139.39 L248.0,142.07 L248.5,144.52 L249.0,146.73 L249.5,148.71 L250.0,150.45 L250.5,151.97 L251.0,153.26 L251.5,154.36 L252.0,155.27 L252.5,156.03 L253.0,156.64 L253.5,157.13 L254.0,157.51 L254.5,157.81 L255.0,158.05 L255.5,158.22 L256.0,158.36 L256.5,158.46 L257.0,158.53 L257.5,158.58 L258.0,158.62 L258.5,158.64 L259.0,158.66 L259.5,158.67 L260.0,158.68 L260.5,158.69 L261.0,158.69 L261.5,158.70 L262.0,158.70 L262.5,158.70 L263.0,158.70 L263.5,158.70 L264.0,158.70 L264.5,158.70 L265.0,158.70 L265.5,158.70 L266.0,158.70 L266.5,158.70 L267.0,158.70 L267.5,158.70 L268.0,158.70 L268.5,158.70 L269.0,158.70 L269.5,158.70 L270.0,158.70 L270.5,158.70 L271.0,158.70 L271.5,158.70 L272.0,158.70 L272.5,158.70 L273.0,158.70 L273.5,158.70 L274.0,158.70 L274.5,158.70 L275.0,158.70 L275.5,158.70 L276.0,158.70 L276.5,158.70 L277.0,158.70 L277.5,158.70 L278.0,158.70 L278.5,158.70 L279.0,158.70 L279.5,158.70 L280.0,158.70 L280.5,158.70 L281.0,158.70 L281.5,158.70 L282.0,158.70 L282.5,158.70 L283.0,158.70 L283.5,158.70 L284.0,158.70 L284.5,158.70 L285.0,158.70 L285.5,158.70 L286.0,158.70 L286.5,158.70 L287.0,158.70 L287.5,158.70 L288.0,158.70 L288.5,158.70 L289.0,158.70 L289.5,158.70 L290.0,158.70 L290.5,158.70 L291.0,158.70 L291.5,158.70 L292.0,158.70 L292.5,158.70 L293.0,158.70 L293.5,158.70 L294.0,158.70 L294.5,158.70 L295.0,158.70 L295.5,158.70 L296.0,158.70 L296.5,158.70 L297.0,158.70 L297.5,158.70 L298.0,158.70 L298.5,158.70 L299.0,158.70 L299.5,158.70 L300.0,158.70 L300.5,158.70 L301.0,158.70 L301.5,158.70 L302.0,158.70 L302.5,158.70 L303.0,158.70 L303.5,158.70 L304.0,158.70 L304.5,158.70 L305.0,158.70 L305.5,158.70 L306.0,158.70 L306.5,158.70 L307.0,158.70 L307.5,158.70 L308.0,158.70 L308.5,158.70 L309.0,158.70 L309.5,158.70 L310.0,158.70 L310.5,158.70 L311.0,158.70 L311.5,158.70 L312.0,158.70 L312.5,158.70 L313.0,158.70 L313.5,158.70 L314.0,158.70 L314.5,158.70 L315.0,158.70 L315.5,158.70 L316.0,158.70 L316.5,158.70 L317.0,158.70 L317.5,158.70 L318.0,158.70 L318.5,158.70 L319.0,158.70 L319.5,158.70 L320.0,158.70 L320.5,158.70 L321.0,158.70 L321.5,158.70 L322.0,158.70 L322.5,158.70 L323.0,158.70 L323.5,158.70 L324.0,158.70 L324.5,158.70 L325.0,158.70 L325.5,158.70 L326.0,158.70 L326.5,158.70 L327.0,158.70 L327.5,158.70 L328.0,158.70 L328.5,158.70 L329.0,158.70 L329.5,158.70 L330.0,158.70 L330.5,158.70 L331.0,158.70 L331.5,158.70 L332.0,158.70 L332.5,158.70 L333.0,158.70 L333.5,158.70 L334.0,158.70 L334.5,158.70 L335.0,158.70 L335.5,158.70 L336.0,158.70 L336.5,158.70 L337.0,158.70 L337.5,158.70 L338.0,158.70 L338.5,158.70 L339.0,158.70 L339.5,158.70 L340.0,158.70 L340.5,158.70 L341.0,158.70 L341.5,158.70 L342.0,158.70 L342.5,158.70 L343.0,158.70 L343.5,158.70 L344.0,158.70 L344.5,158.70 L345.0,158.70 L345.5,158.70 L346.0,158.70 L346.5,158.70 L347.0,158.70 L347.5,158.70 L348.0,158.70 L348.5,158.70 L349.0,158.70 L349.5,158.70 L350.0,158.70 L350.5,158.70 L351.0,158.70 L351.5,158.70 L352.0,158.70 L352.5,158.70 L353.0,158.70 L353.5,158.70 L354.0,158.70 L354.5,158.70 L355.0,158.70 L355.5,158.70 L356.0,158.70 L356.5,158.70 L357.0,158.70 L357.5,158.70 L358.0,158.70 L358.5,158.70 L359.0,158.70 L359.5,158.70 L360.0,158.70 L360.5,158.70 L361.0,158.70 L361.5,158.70 L362.0,158.70 L362.5,158.70 L363.0,158.70 L363.5,158.70 L364.0,158.70 L364.5,158.70 L365.0,158.70 L365.5,158.70 L366.0,158.70 L366.5,158.70 L367.0,158.70 L367.5,158.70 L368.0,158.70 L368.5,158.70 L369.0,158.69 L369.5,158.69 L370.0,158.69 L370.5,158.68 L371.0,158.67 L371.5,158.65 L372.0,158.63 L372.5,158.60 L373.0,158.55 L373.5,158.49 L374.0,158.41 L374.5,158.29 L375.0,158.13 L375.5,157.92 L376.0,157.65 L376.5,157.30 L377.0,156.86 L377.5,156.29 L378.0,155.60 L378.5,154.74 L379.0,153.71 L379.5,152.47 L380.0,151.02 L380.5,149.34 L381.0,147.41 L381.5,145.23 L382.0,142.80 L382.5,140.14 L383.0,137.23 L383.5,134.11 L384.0,130.79 L384.5,127.29 L385.0,123.64 L385.5,119.91 L386.0,116.18 L386.5,112.57 L387.0,109.23 L387.5,106.34 L388.0,104.11 L388.5,102.69 L389.0,102.20 L389.5,102.69 L390.0,104.11 L390.5,106.34 L391.0,109.23 L391.5,112.57 L392.0,116.18 L392.5,119.91 L393.0,123.64 L393.5,127.29 L394.0,130.79 L394.5,134.11 L395.0,137.23 L395.5,140.14 L396.0,142.80 L396.5,145.23 L397.0,147.41 L397.5,149.34 L398.0,151.02 L398.5,152.47 L399.0,153.71 L399.5,154.74 L400.0,155.60 L400.5,156.29 L401.0,156.86 L401.5,157.30 L402.0,157.65 L402.5,157.92 L403.0,158.13 L403.5,158.29 L404.0,158.41 L404.5,158.49 L405.0,158.55 L405.5,158.60 L406.0,158.63 L406.5,158.65 L407.0,158.67 L407.5,158.68 L408.0,158.69 L408.5,158.69 L409.0,158.69 L409.5,158.70 L410.0,158.70 L410.5,158.70 L411.0,158.70 L411.5,158.70 L412.0,158.70 L412.5,158.70 L413.0,158.70 L413.5,158.70 L414.0,158.70 L414.5,158.70 L415.0,158.70 L415.5,158.70 L416.0,158.70 L416.5,158.70 L417.0,158.70 L417.5,158.70 L418.0,158.70 L418.5,158.70 L419.0,158.70 L419.5,158.70 L420.0,158.70 L420.5,158.70 L421.0,158.70 L421.5,158.70 L422.0,158.70 L422.5,158.70 L423.0,158.70 L423.5,158.70 L424.0,158.70 L424.5,158.70 L425.0,158.70 L425.5,158.70 L426.0,158.70 L426.5,158.70 L427.0,158.70 L427.5,158.70 L428.0,158.70 L428.5,158.70 L429.0,158.70 L429.5,158.70 L430.0,158.70 L430.5,158.70 L431.0,158.70 L431.5,158.70 L432.0,158.70 L432.5,158.70 L433.0,158.70 L433.5,158.70 L434.0,158.70 L434.5,158.70 L435.0,158.70 L435.5,158.70 L436.0,158.70 L436.5,158.70 L437.0,158.70 L437.5,158.70 L438.0,158.70 L438.5,158.70 L439.0,158.70 L439.5,158.70 L440.0,158.70 L440.5,158.70 L441.0,158.70 L441.5,158.70 L442.0,158.70 L442.5,158.70 L443.0,158.70 L443.5,158.70 L444.0,158.70 L444.5,158.70 L445.0,158.70 L445.5,158.70 L446.0,158.70 L446.5,158.70 L447.0,158.70 L447.5,158.70 L448.0,158.70 L448.5,158.70 L449.0,158.70 L449.5,158.70 L450.0,158.70 L450.5,158.70 L451.0,158.70 L451.5,158.70 L452.0,158.70 L452.5,158.70 L453.0,158.70 L453.5,158.70 L454.0,158.70 L454.5,158.70 L455.0,158.70 L455.5,158.70 L456.0,158.70 L456.5,158.70 L457.0,158.70 L457.5,158.70 L458.0,158.70 L458.5,158.70 L459.0,158.70 L459.5,158.70 L460.0,158.70 L460.5,158.70 L461.0,158.70 L461.5,158.70 L462.0,158.70 L462.5,158.70 L463.0,158.70 L463.5,158.70 L464.0,158.70 L464.5,158.70 L465.0,158.70 L465.5,158.70 L466.0,158.70 L466.5,158.70 L467.0,158.70 L467.5,158.70 L468.0,158.70 L468.5,158.70 L469.0,158.70 L469.5,158.70 L470.0,158.70 L470.5,158.70 L471.0,158.70 L471.5,158.70 L472.0,158.70 L472.5,158.70 L473.0,158.70 L473.5,158.70 L474.0,158.70 L474.5,158.70 L475.0,158.70 L475.5,158.70 L476.0,158.70 L476.5,158.70 L477.0,158.70 L477.5,158.70 L478.0,158.70 L478.5,158.70 L479.0,158.70 L479.5,158.70 L480.0,158.70 L480.5,158.70 L481.0,158.70 L481.5,158.70 L482.0,158.70 L482.5,158.70 L483.0,158.70 L483.5,158.70 L484.0,158.70 L484.5,158.70 L485.0,158.70 L485.5,158.70 L486.0,158.70 L486.5,158.70 L487.0,158.70 L487.5,158.70 L488.0,158.70 L488.5,158.70 L489.0,158.70 L489.5,158.70 L490.0,158.70 L490.5,158.70 L491.0,158.70 L491.5,158.70 L492.0,158.70 L492.5,158.70 L493.0,158.70 L493.5,158.70 L494.0,158.70 L494.5,158.70 L495.0,158.70 L495.5,158.70 L496.0,158.70 L496.5,158.70 L497.0,158.70 L497.5,158.70 L498.0,158.70 L498.5,158.70 L499.0,158.70 L499.5,158.70 L500.0,158.70 L500.5,158.70 L501.0,158.70 L501.5,158.70 L502.0,158.70 L502.5,158.70 L503.0,158.70 L503.5,158.70 L504.0,158.70 L504.5,158.70 L505.0,158.70 L505.5,158.70 L506.0,158.70 L506.5,158.70 L507.0,158.70 L507.5,158.70 L508.0,158.70 L508.5,158.70 L509.0,158.70 L509.5,158.70 L510.0,158.70 L510.5,158.70 L511.0,158.70 L511.5,158.70 L512.0,158.70 L512.5,158.70 L513.0,158.70 L513.5,158.70 L514.0,158.70 L514.5,158.70 L515.0,158.70 L515.5,158.70 L516.0,158.70 L516.5,158.70 L517.0,158.70 L517.5,158.70 L518.0,158.70 L518.5,158.70 L519.0,158.70 L519.5,158.70 L520.0,158.70 L520.5,158.70 L521.0,158.70 L521.5,158.70 L522.0,158.70 L522.5,158.70 L523.0,158.70 L523.5,158.70 L524.0,158.70 L524.5,158.70 L525.0,158.70 L525.5,158.70 L526.0,158.70 L526.5,158.70 L527.0,158.70 L527.5,158.70 L528.0,158.70 L528.5,158.70 L529.0,158.70 L529.5,158.70 L530.0,158.70 L530.5,158.70 L531.0,158.70 L531.5,158.70 L532.0,158.70 L532.5,158.70 L533.0,158.70 L533.5,158.70 L534.0,158.70 L534.5,158.70 L535.0,158.70 L535.5,158.70 L536.0,158.70 L536.5,158.70 L537.0,158.70 L537.5,158.70 L538.0,158.70 L538.5,158.70 L539.0,158.70 L539.5,158.70 L540.0,158.70 L540.5,158.70 L541.0,158.70 L541.5,158.70 L542.0,158.70 L542.5,158.70 L543.0,158.70 L543.5,158.70 L544.0,158.70 L544.5,158.70 L545.0,158.70 L545.5,158.70 L546.0,158.70 L546.5,158.70 L547.0,158.70 L547.5,158.70 L548.0,158.70 L548.5,158.70 L549.0,158.70 L549.5,158.70 L550.0,158.70 L550.5,158.70 L551.0,158.70 L551.5,158.70 L552.0,158.70 L552.5,158.70 L553.0,158.70 L553.5,158.70 L554.0,158.70 L554.5,158.70 L555.0,158.70 L555.5,158.70 L556.0,158.70 L556.5,158.70 L557.0,158.70 L557.5,158.70 L558.0,158.70 L558.5,158.70 L559.0,158.70 L559.5,158.70 L560.0,158.70 L560.5,158.70 L561.0,158.70 L561.5,158.70 L562.0,158.70 L562.5,158.70 L563.0,158.70 L563.5,158.70 L564.0,158.70 L564.5,158.70 L565.0,158.70 L565.5,158.70 L566.0,158.70 L566.5,158.70 L567.0,158.70 L567.5,158.70 L568.0,158.70 L568.5,158.70 L569.0,158.70 L569.5,158.70 L570.0,158.70 L570.5,158.69 L571.0,158.69 L571.5,158.69 L572.0,158.68 L572.5,158.67 L573.0,158.66 L573.5,158.63 L574.0,158.60 L574.5,158.56 L575.0,158.50 L575.5,158.42 L576.0,158.31 L576.5,158.17 L577.0,157.97 L577.5,157.72 L578.0,157.40 L578.5,156.99 L579.0,156.47 L579.5,155.83 L580.0,155.05 L580.5,154.10 L581.0,152.98 L581.5,151.67 L582.0,150.14 L582.5,148.40 L583.0,146.44 L583.5,144.27 L584.0,141.88 L584.5,139.28 L585.0,136.50 L585.5,133.54 L586.0,130.43 L586.5,127.21 L587.0,123.92 L587.5,120.65 L588.0,117.51 L588.5,114.64 L589.0,112.20 L589.5,110.37 L590.0,109.27 L590.5,109.02 L591.0,109.61 L591.5,111.02 L592.0,113.11 L592.5,115.74 L593.0,118.74 L593.5,121.95 L594.0,125.24 L594.5,128.51 L595.0,131.69 L595.5,134.75 L596.0,137.63 L596.5,140.34 L597.0,142.86 L597.5,145.16 L598.0,147.25 L598.5,149.12 L599.0,150.78 L599.5,152.22 L600.0,153.45 L600.5,154.50 L601.0,155.38 L601.5,156.10 L602.0,156.69 L602.5,157.16 L603.0,157.54 L603.5,157.83 L604.0,158.06 L604.5,158.23 L605.0,158.36 L605.5,158.46 L606.0,158.53 L606.5,158.58 L607.0,158.62 L607.5,158.64 L608.0,158.66 L608.5,158.67 L609.0,158.68 L609.5,158.69 L610.0,158.69 L610.5,158.70 L611.0,158.70 L611.5,158.70 L612.0,158.70 L612.5,158.70 L613.0,158.70 L613.5,158.70 L614.0,158.70 L614.5,158.70 L615.0,158.70 L615.5,158.70 L616.0,158.70 L616.5,158.70 L617.0,158.70 L617.5,158.70 L618.0,158.70 L618.5,158.70 L619.0,158.70 L619.5,158.70 L620.0,158.70 L620.5,158.70 L621.0,158.70 L621.5,158.70 L622.0,158.70 L622.5,158.70 L623.0,158.70 L623.5,158.70 L624.0,158.70 L624.5,158.70 L625.0,158.70 L625.5,158.70 L626.0,158.70 L626.5,158.70 L627.0,158.70 L627.5,158.70 L628.0,158.70 L628.5,158.70 L629.0,158.70 L629.5,158.70 L630.0,158.70 L630.5,158.70 L631.0,158.70 L631.5,158.70 L632.0,158.70 L632.5,158.70 L633.0,158.70 L633.5,158.70 L634.0,158.70 L634.5,158.70 L635.0,158.70 L635.5,158.70 L636.0,158.70 L636.5,158.70 L637.0,158.70 L637.5,158.70 L638.0,158.70 L638.5,158.70 L639.0,158.70 L639.5,158.70 L640.0,158.70 L640.5,158.70 L641.0,158.70 L641.5,158.70 L642.0,158.70 L642.5,158.70 L643.0,158.70 L643.5,158.70 L644.0,158.70 L644.5,158.70 L645.0,158.70 L645.5,158.70 L646.0,158.70 L646.5,158.70 L647.0,158.70 L647.5,158.70 L648.0,158.70 L648.5,158.70 L649.0,158.70 L649.5,158.70 L650.0,158.70 L650.5,158.70 L651.0,158.70 L651.5,158.70 L652.0,158.70 L652.5,158.70 L653.0,158.70 L653.5,158.70 L654.0,158.70 L654.5,158.70 L655.0,158.70 L655.5,158.70 L656.0,158.70 L656.5,158.70 L657.0,158.70 L657.5,158.70 L658.0,158.70 L658.5,158.70 L659.0,158.70 L659.5,158.70 L660.0,158.70 L660.5,158.70 L661.0,158.70 L661.5,158.70 L662.0,158.70 L662.5,158.70 L663.0,158.70 L663.5,158.70 L664.0,158.70 L664.5,158.70 L665.0,158.70 L665.5,158.70 L666.0,158.70 L666.5,158.70 L667.0,158.70 L667.5,158.70 L668.0,158.70 L668.5,158.70 L669.0,158.70 L669.5,158.70 L670.0,158.70 L670.5,158.70 L671.0,158.70 L671.5,158.70 L672.0,158.70 L672.5,158.70 L673.0,158.70 L673.5,158.70 L674.0,158.70 L674.5,158.70 L675.0,158.70 L675.5,158.70 L676.0,158.70 L676.5,158.70 L677.0,158.70 L677.5,158.70 L678.0,158.70 L678.5,158.70 L679.0,158.70 L679.5,158.70 L680.0,158.70 L680.5,158.70 L681.0,158.70 L681.5,158.70 L682.0,158.70 L682.5,158.70 L683.0,158.70 L683.5,158.70 L684.0,158.70 L684.5,158.70 L685.0,158.70 L685.5,158.70 L686.0,158.70 L686.5,158.70 L687.0,158.70 L687.5,158.70 L688.0,158.70 L688.5,158.70 L689.0,158.70 L689.5,158.70 L690.0,158.70 L690.5,158.70 L691.0,158.70 L691.5,158.70 L692.0,158.70 L692.5,158.70 L693.0,158.70 L693.5,158.70 L694.0,158.70 L694.5,158.70 L695.0,158.70 L695.5,158.70 L696.0,158.70 L696.5,158.70 L697.0,158.70 L697.5,158.70 L698.0,158.70 L698.5,158.70 L699.0,158.70 L699.5,158.70 L700.0,158.70 L700.5,158.70 L701.0,158.70 L701.5,158.70 L702.0,158.70 L702.5,158.70 L703.0,158.70 L703.5,158.70 L704.0,158.70 L704.5,158.70 L705.0,158.70 L705.5,158.70 L706.0,158.70 L706.5,158.70 L707.0,158.70 L707.5,158.70 L708.0,158.70 L708.5,158.70 L709.0,158.70 L709.5,158.70 L710.0,158.70 L710.5,158.70 L711.0,158.70 L711.5,158.70 L712.0,158.70 L712.5,158.70 L713.0,158.70 L713.5,158.70 L714.0,158.70 L714.5,158.70 L715.0,158.70 L715.5,158.70 L716.0,158.70 L716.5,158.70 L717.0,158.70 L717.5,158.70 L718.0,158.69 L718.5,158.69 L719.0,158.68 L719.5,158.67 L720.0,158.66 L720.5,158.64 L721.0,158.62 L721.5,158.58 L722.0,158.53 L722.5,158.47 L723.0,158.38 L723.5,158.26 L724.0,158.11 L724.5,157.91 L725.0,157.66 L725.5,157.34 L726.0,156.94 L726.5,156.46 L727.0,155.87 L727.5,155.17 L728.0,154.35 L728.5,153.40 L729.0,152.30 L729.5,151.07 L730.0,149.70 L730.5,148.19 L731.0,146.54 L731.5,144.77 L732.0,142.89 L732.5,140.91 L733.0,138.84 L733.5,136.73 L734.0,134.62 L734.5,132.57 L735.0,130.68 L735.5,129.05 L736.0,127.78 L736.5,126.98 L737.0,126.70 L737.5,126.98 L738.0,127.78 L738.5,129.05 L739.0,130.68 L739.5,132.57 L740.0,134.62 L740.5,136.73 L741.0,138.84 L741.5,140.91 L742.0,142.89 L742.5,144.77 L743.0,146.54 L743.5,148.19 L744.0,149.70 L744.5,151.07 L745.0,152.30 L745.5,153.40 L746.0,154.35 L746.5,155.17 L747.0,155.87 L747.5,156.46 L748.0,156.94 L748.5,157.34 L749.0,157.66 L749.5,157.91 L750.0,158.11 L750.5,158.26 L751.0,158.38 L751.5,158.47 L752.0,158.53 L752.5,158.58 L753.0,158.62 L753.5,158.64 L754.0,158.66 L754.5,158.67 L755.0,158.68 L755.5,158.69 L756.0,158.69 L756.5,158.70 L757.0,158.70 L757.5,158.70 L758.0,158.70 L758.5,158.70 L759.0,158.70 L759.5,158.70 L760.0,158.70 L760.5,158.70 L761.0,158.70 L761.5,158.70 L762.0,158.70 L762.5,158.70 L763.0,158.70 L763.5,158.70 L764.0,158.70 L764.5,158.70 L765.0,158.70 L765.5,158.70 L766.0,158.70 L766.5,158.70 L767.0,158.70 L767.5,158.70 L768.0,158.70 L768.5,158.70 L769.0,158.70 L769.5,158.70 L770.0,158.70 L770.5,158.70 L771.0,158.70 L771.5,158.70 L772.0,158.70 L772.5,158.70 L773.0,158.70 L773.5,158.70 L774.0,158.70 L774.5,158.70 L775.0,158.70 L775.5,158.70 L776.0,158.70 L776.5,158.70 L777.0,158.70 L777.5,158.70 L778.0,158.70 L778.5,158.70 L779.0,158.70 L779.5,158.70 L780.0,158.70 L780.5,158.70 L781.0,158.70 L781.5,158.70 L782.0,158.70 L782.5,158.70 L783.0,158.70 L783.5,158.70 L784.0,158.70 L784.5,158.70 L785.0,158.70 L785.5,158.70 L786.0,158.70 L786.5,158.70 L787.0,158.70 L787.5,158.70 L788.0,158.70 L788.5,158.70 L789.0,158.70 L789.5,158.70 L790.0,158.70 L790.5,158.70 L791.0,158.70 L791.5,158.70 L792.0,158.70 L792.5,158.70 L793.0,158.70 L793.5,158.70 L794.0,158.70 L794.5,158.70 L795.0,158.70 L795.5,158.70 L796.0,158.70 L796.5,158.70 L797.0,158.70 L797.5,158.70 L798.0,158.70 L798.5,158.70 L799.0,158.70 L799.5,158.70 L800.0,158.70 L800.5,158.70 L801.0,158.70 L801.5,158.70 L802.0,158.70 L802.5,158.70 L803.0,158.70 L803.5,158.70 L804.0,158.70 L804.5,158.70 L805.0,158.70 L805.5,158.70 L806.0,158.70 L806.5,158.70 L807.0,158.70 L807.5,158.70 L808.0,158.70 L808.5,158.70 L809.0,158.70 L809.5,158.70 L810.0,158.70 L810.5,158.70 L811.0,158.70 L811.5,158.70 L812.0,158.70 L812.5,158.70 L813.0,158.70 L813.5,158.70 L814.0,158.70 L814.5,158.70 L815.0,158.70 L815.5,158.70 L816.0,158.70 L816.5,158.70 L817.0,158.70 L817.5,158.70 L818.0,158.70 L818.5,158.70 L819.0,158.70 L819.5,158.70 L820.0,158.70 L820.5,158.70 L821.0,158.70 L821.5,158.70 L822.0,158.70 L822.5,158.70 L823.0,158.70 L823.5,158.70 L824.0,158.70 L824.5,158.70 L825.0,158.70 L825.5,158.70 L826.0,158.70 L826.5,158.70 L827.0,158.70 L827.5,158.70 L828.0,158.70 L828.5,158.70 L829.0,158.70 L829.5,158.70 L830.0,158.70 L830.5,158.70 L831.0,158.70 L831.5,158.70 L832.0,158.70 L832.5,158.70 L833.0,158.70 L833.5,158.70 L834.0,158.70 L834.5,158.70 L835.0,158.70 L835.5,158.70 L836.0,158.70 L836.5,158.70 L837.0,158.70 L837.5,158.70 L838.0,158.70 L838.5,158.70 L839.0,158.70 L839.5,158.70 L840.0,158.70 L840.5,158.70 L841.0,158.70 L841.5,158.70 L842.0,158.70 L842.5,158.70 L843.0,158.70 L843.5,158.70 L844.0,158.70 L844.5,158.70 L845.0,158.70 L845.5,158.70 L846.0,158.70 L846.5,158.70 L847.0,158.70 L847.5,158.70 L848.0,158.70 L848.5,158.70 L849.0,158.70 L849.5,158.70 L850.0,158.70 L850.5,158.70 L851.0,158.70 L851.5,158.70 L852.0,158.70 L852.5,158.70 L853.0,158.70 L853.5,158.69 L854.0,158.69 L854.5,158.69 L855.0,158.68 L855.5,158.67 L856.0,158.65 L856.5,158.63 L857.0,158.60 L857.5,158.55 L858.0,158.49 L858.5,158.40 L859.0,158.27 L859.5,158.11 L860.0,157.88 L860.5,157.58 L861.0,157.19 L861.5,156.68 L862.0,156.04 L862.5,155.22 L863.0,154.22 L863.5,152.98 L864.0,151.49 L864.5,149.71 L865.0,147.61 L865.5,145.18 L866.0,142.39 L866.5,139.25 L867.0,135.74 L867.5,131.89 L868.0,127.70 L868.5,123.19 L869.0,118.39 L869.5,113.33 L870.0,108.07 L870.5,102.68 L871.0,97.29 L871.5,92.07 L872.0,87.25 L872.5,83.08 L873.0,79.85 L873.5,77.80 L874.0,77.10 L874.5,77.80 L875.0,79.85 L875.5,83.08 L876.0,87.25 L876.5,92.07 L877.0,97.29 L877.5,102.68 L878.0,108.07 L878.5,113.33 L879.0,118.39 L879.5,123.19 L880.0,127.70 L880.5,131.89 L881.0,135.74 L881.5,139.25 L882.0,142.39 L882.5,145.18 L883.0,147.61 L883.5,149.71 L884.0,151.49 L884.5,152.98 L885.0,154.22 L885.5,155.22 L886.0,156.04 L886.5,156.68 L887.0,157.19 L887.5,157.58 L888.0,157.88 L888.5,158.11 L889.0,158.27 L889.5,158.40 L890.0,158.49 L890.5,158.55 L891.0,158.60 L891.5,158.63 L892.0,158.65 L892.5,158.67 L893.0,158.68 L893.5,158.69 L894.0,158.69 L894.5,158.69 L895.0,158.70 L895.5,158.70 L896.0,158.70 L896.5,158.70 L897.0,158.70 L897.5,158.70 L898.0,158.70 L898.5,158.70 L899.0,158.70 L899.5,158.70 L900.0,158.70 L900.5,158.70 L901.0,158.70 L901.5,158.70 L902.0,158.70 L902.5,158.70 L903.0,158.70 L903.5,158.70 L904.0,158.70 L904.5,158.70 L905.0,158.70 L905.5,158.70 L906.0,158.70 L906.5,158.70 L907.0,158.70 L907.5,158.70 L908.0,158.70 L908.5,158.70 L909.0,158.70 L909.5,158.70 L910.0,158.70 L910.5,158.70 L911.0,158.70 L911.5,158.70 L912.0,158.70 L912.5,158.70 L913.0,158.70 L913.5,158.70 L914.0,158.70 L914.5,158.70 L915.0,158.70 L915.5,158.70 L916.0,158.70 L916.5,158.70 L917.0,158.70 L917.5,158.70 L918.0,158.70 L918.5,158.70 L919.0,158.70 L919.5,158.70 L920.0,158.70 L920.5,158.70 L921.0,158.70 L921.5,158.70 L922.0,158.70 L922.5,158.70 L923.0,158.70 L923.5,158.70 L924.0,158.70 L924.5,158.70 L925.0,158.70 L925.5,158.70 L926.0,158.70 L926.5,158.70 L927.0,158.70 L927.5,158.70 L928.0,158.70 L928.5,158.70 L929.0,158.70 L929.5,158.70 L930.0,158.70 L930.5,158.70 L931.0,158.70 L931.5,158.70 L932.0,158.70 L932.5,158.70 L933.0,158.70 L933.5,158.70 L934.0,158.70 L934.5,158.70 L935.0,158.70 L935.5,158.70 L936.0,158.70 L936.5,158.70 L937.0,158.70 L937.5,158.70 L938.0,158.70 L938.5,158.70 L939.0,158.70 L939.5,158.70 L940.0,158.70 L940.5,158.70 L941.0,158.70 L941.5,158.70 L942.0,158.70 L942.5,158.70 L943.0,158.70 L943.5,158.70 L944.0,158.70 L944.5,158.70 L945.0,158.70 L945.5,158.70 L946.0,158.70 L946.5,158.70 L947.0,158.70 L947.5,158.70 L948.0,158.70 L948.5,158.70 L949.0,158.70 L949.5,158.70 L950.0,158.70 L950.5,158.70 L951.0,158.70 L951.5,158.70 L952.0,158.70 L952.5,158.70 L953.0,158.70 L953.5,158.70 L954.0,158.70 L954.5,158.70 L955.0,158.70 L955.5,158.70 L956.0,158.70 L956.5,158.70 L957.0,158.70 L957.5,158.70 L958.0,158.70 L958.5,158.70 L959.0,158.70 L959.5,158.70 L960.0,158.70 L960.5,158.70 L961.0,158.70 L961.5,158.70 L962.0,158.70 L962.5,158.70 L963.0,158.70 L963.5,158.70 L964.0,158.70 L964.5,158.70 L965.0,158.70 L965.5,158.70 L966.0,158.70 L966.5,158.70 L967.0,158.70 L967.5,158.70 L968.0,158.70 L968.5,158.70 L969.0,158.70 L969.5,158.70 L970.0,158.70 L970.5,158.70 L971.0,158.70 L971.5,158.70 L972.0,158.70 L972.5,158.70 L973.0,158.70 L973.5,158.70 L974.0,158.70 L974.5,158.70 L975.0,158.70 L975.5,158.70 L976.0,158.70 L976.5,158.70 L977.0,158.70 L977.5,158.70 L978.0,158.70 L978.5,158.70 L979.0,158.70 L979.5,158.70 L980.0,158.70 L980.5,158.70 L981.0,158.70 L981.5,158.70 L982.0,158.70 L982.5,158.70 L983.0,158.70 L983.5,158.69 L984.0,158.69 L984.5,158.69 L985.0,158.68 L985.5,158.67 L986.0,158.66 L986.5,158.64 L987.0,158.61 L987.5,158.57 L988.0,158.51 L988.5,158.44 L989.0,158.34 L989.5,158.21 L990.0,158.03 L990.5,157.80 L991.0,157.51 L991.5,157.14 L992.0,156.68 L992.5,156.11 L993.0,155.42 L993.5,154.59 L994.0,153.61 L994.5,152.46 L995.0,151.14 L995.5,149.65 L996.0,147.97 L996.5,146.12 L997.0,144.09 L997.5,141.91 L998.0,139.57 L998.5,137.09 L999.0,134.51 L999.5,131.84 L1000.0,129.14 L1000.5,126.49 L1001.0,123.99 L1001.5,121.77 L1002.0,119.95 L1002.5,118.68 L1003.0,118.06 L1003.5,118.13 L1004.0,118.89 L1004.5,120.28 L1005.0,122.18 L1005.5,124.47 L1006.0,127.01 L1006.5,129.68 L1007.0,132.38 L1007.5,135.03 L1008.0,137.60 L1008.5,140.05 L1009.0,142.36 L1009.5,144.51 L1010.0,146.50 L1010.5,148.32 L1011.0,149.96 L1011.5,151.42 L1012.0,152.70 L1012.5,153.81 L1013.0,154.76 L1013.5,155.57 L1014.0,156.23 L1014.5,156.78 L1015.0,157.22 L1015.5,157.57 L1016.0,157.85 L1016.5,158.07 L1017.0,158.24 L1017.5,158.36 L1018.0,158.46 L1018.5,158.53 L1019.0,158.58 L1019.5,158.62 L1020.0,158.64 L1020.5,158.66 L1021.0,158.67 L1021.5,158.68 L1022.0,158.69 L1022.5,158.69 L1023.0,158.70 L1023.5,158.70 L1024.0,158.70 L1024.5,158.70 L1025.0,158.70 L1025.5,158.70 L1026.0,158.70 L1026.5,158.70 L1027.0,158.70 L1027.5,158.70 L1028.0,158.70 L1028.5,158.70 L1029.0,158.70 L1029.5,158.70 L1030.0,158.70 L1030.5,158.70 L1031.0,158.70 L1031.5,158.70 L1032.0,158.70 L1032.5,158.70 L1033.0,158.70 L1033.5,158.70 L1034.0,158.70 L1034.5,158.70 L1035.0,158.70 L1035.5,158.70 L1036.0,158.70 L1036.5,158.70 L1037.0,158.70 L1037.5,158.70 L1038.0,158.70 L1038.5,158.70 L1039.0,158.70 L1039.5,158.70 L1040.0,158.70 L1040.5,158.70 L1041.0,158.70 L1041.5,158.70 L1042.0,158.70 L1042.5,158.70 L1043.0,158.70 L1043.5,158.70 L1044.0,158.70 L1044.5,158.70 L1045.0,158.70 L1045.5,158.70 L1046.0,158.70 L1046.5,158.70 L1047.0,158.70 L1047.5,158.70 L1048.0,158.70 L1048.5,158.70 L1049.0,158.70 L1049.5,158.70 L1050.0,158.70 L1050.5,158.70 L1051.0,158.70 L1051.5,158.70 L1052.0,158.70 L1052.5,158.70 L1053.0,158.70 L1053.5,158.70 L1054.0,158.70 L1054.5,158.70 L1055.0,158.70 L1055.5,158.70 L1056.0,158.70 L1056.5,158.70 L1057.0,158.70 L1057.5,158.70 L1058.0,158.70 L1058.5,158.70 L1059.0,158.70 L1059.5,158.70 L1060.0,158.70 L1060.5,158.70 L1061.0,158.70 L1061.5,158.70 L1062.0,158.70 L1062.5,158.70 L1063.0,158.70 L1063.5,158.70 L1064.0,158.70 L1064.5,158.70 L1065.0,158.70 L1065.5,158.70 L1066.0,158.70 L1066.5,158.70 L1067.0,158.70 L1067.5,158.70 L1068.0,158.70 L1068.5,158.70 L1069.0,158.70 L1069.5,158.70 L1070.0,158.70 L1070.5,158.70 L1071.0,158.70 L1071.5,158.70 L1072.0,158.70 L1072.5,158.70 L1073.0,158.70 L1073.5,158.70 L1074.0,158.70 L1074.5,158.70 L1075.0,158.70 L1075.5,158.70 L1076.0,158.70 L1076.5,158.70 L1077.0,158.70 L1077.5,158.70 L1078.0,158.70 L1078.5,158.70 L1079.0,158.70 L1079.5,158.70 L1080.0,158.70 L1080.5,158.70 L1081.0,158.70 L1081.5,158.70 L1082.0,158.70 L1082.5,158.70 L1083.0,158.70 L1083.5,158.70 L1084.0,158.70 L1084.5,158.70 L1085.0,158.70 L1085.5,158.70 L1086.0,158.70 L1086.5,158.70 L1087.0,158.70 L1087.5,158.70 L1088.0,158.70 L1088.5,158.70 L1089.0,158.70 L1089.5,158.70 L1090.0,158.70 L1090.5,158.70 L1091.0,158.70 L1091.5,158.70 L1092.0,158.70 L1092.5,158.70 L1093.0,158.70 L1093.5,158.70 L1094.0,158.70 L1094.5,158.70 L1095.0,158.70 L1095.5,158.70 L1096.0,158.70 L1096.5,158.70 L1097.0,158.70 L1097.5,158.70 L1098.0,158.70 L1098.5,158.70 L1099.0,158.70 L1099.5,158.70 L1100.0,158.70 L1100.5,158.70 L1101.0,158.70 L1101.5,158.70 L1102.0,158.70 L1102.5,158.70 L1103.0,158.70 L1103.5,158.70 L1104.0,158.70 L1104.5,158.70 L1105.0,158.70 L1105.5,158.70 L1106.0,158.70 L1106.5,158.70 L1107.0,158.70 L1107.5,158.70 L1108.0,158.70 L1108.5,158.70 L1109.0,158.70 L1109.5,158.70 L1110.0,158.70 L1110.5,158.70 L1111.0,158.70 L1111.5,158.70 L1112.0,158.70 L1112.5,158.70 L1113.0,158.70 L1113.5,158.70 L1114.0,158.70 L1114.5,158.70 L1115.0,158.70 L1115.5,158.70 L1116.0,158.70 L1116.5,158.70 L1117.0,158.70 L1117.5,158.70 L1118.0,158.70 L1118.5,158.70 L1119.0,158.69 L1119.5,158.69 L1120.0,158.69 L1120.5,158.68 L1121.0,158.67 L1121.5,158.66 L1122.0,158.63 L1122.5,158.60 L1123.0,158.56 L1123.5,158.49 L1124.0,158.41 L1124.5,158.29 L1125.0,158.13 L1125.5,157.91 L1126.0,157.62 L1126.5,157.25 L1127.0,156.77 L1127.5,156.16 L1128.0,155.39 L1128.5,154.44 L1129.0,153.28 L1129.5,151.88 L1130.0,150.21 L1130.5,148.25 L1131.0,145.99 L1131.5,143.41 L1132.0,140.50 L1132.5,137.27 L1133.0,133.72 L1133.5,129.87 L1134.0,125.73 L1134.5,121.34 L1135.0,116.73 L1135.5,111.94 L1136.0,107.06 L1136.5,102.20 L1137.0,97.53 L1137.5,93.27 L1138.0,89.65 L1138.5,86.93 L1139.0,85.31 L1139.5,84.93 L1140.0,85.81 L1140.5,87.90 L1141.0,91.00 L1141.5,94.91 L1142.0,99.36 L1142.5,104.13 L1143.0,109.02 L1143.5,113.87 L1144.0,118.60 L1144.5,123.13 L1145.0,127.42 L1145.5,131.44 L1146.0,135.17 L1146.5,138.60 L1147.0,141.70 L1147.5,144.48 L1148.0,146.93 L1148.5,149.07 L1149.0,150.91 L1149.5,152.47 L1150.0,153.77 L1150.5,154.84 L1151.0,155.72 L1151.5,156.42 L1152.0,156.97 L1152.5,157.41 L1153.0,157.75 L1153.5,158.00 L1154.0,158.20 L1154.5,158.34 L1155.0,158.45 L1155.5,158.52 L1156.0,158.58 L1156.5,158.62 L1157.0,158.64 L1157.5,158.66 L1158.0,158.68 L1158.5,158.68 L1159.0,158.69 L1159.5,158.69 L1160.0,158.70 L1160.5,158.70 L1161.0,158.70 L1161.5,158.70 L1162.0,158.70 L1162.5,158.70 L1163.0,158.70 L1163.5,158.70 L1164.0,158.70 L1164.5,158.70 L1165.0,158.70 L1165.5,158.70 L1166.0,158.70 L1166.5,158.70 L1167.0,158.70 L1167.5,158.70 L1168.0,158.70 L1168.5,158.70 L1169.0,158.70 L1169.5,158.70 L1170.0,158.70 L1170.5,158.70 L1171.0,158.70 L1171.5,158.70 L1172.0,158.70 L1172.5,158.70 L1173.0,158.70 L1173.5,158.70 L1174.0,158.70 L1174.5,158.70 L1175.0,158.70 L1175.5,158.70 L1176.0,158.70 L1176.5,158.70 L1177.0,158.70 L1177.5,158.70 L1178.0,158.70 L1178.5,158.70 L1179.0,158.70 L1179.5,158.70 L1180.0,158.70 L1180.5,158.70 L1181.0,158.70 L1181.5,158.70 L1182.0,158.70 L1182.5,158.70 L1183.0,158.70 L1183.5,158.70 L1184.0,158.70 L1184.5,158.70 L1185.0,158.70 L1185.5,158.70 L1186.0,158.70 L1186.5,158.70 L1187.0,158.70 L1187.5,158.70 L1188.0,158.70 L1188.5,158.70 L1189.0,158.70 L1189.5,158.70 L1190.0,158.70 L1190.5,158.70 L1191.0,158.70 L1191.5,158.70 L1192.0,158.70 L1192.5,158.70 L1193.0,158.70 L1193.5,158.70 L1194.0,158.70 L1194.5,158.70 L1195.0,158.70 L1195.5,158.70 L1196.0,158.70 L1196.5,158.70 L1197.0,158.70 L1197.5,158.70 L1198.0,158.70 L1198.5,158.70 L1199.0,158.70 L1199.5,158.70 L1200.0,158.70 L1200.5,158.70 L1201.0,158.70 L1201.5,158.70 L1202.0,158.70 L1202.5,158.70 L1203.0,158.70 L1203.5,158.70 L1204.0,158.70 L1204.5,158.70 L1205.0,158.70 L1205.5,158.70 L1206.0,158.70 L1206.5,158.70 L1207.0,158.70 L1207.5,158.70 L1208.0,158.70 L1208.5,158.70 L1209.0,158.70 L1209.5,158.70 L1210.0,158.70 L1210.5,158.70 L1211.0,158.70 L1211.5,158.70 L1212.0,158.70 L1212.5,158.70 L1213.0,158.70 L1213.5,158.70 L1214.0,158.70 L1214.5,158.70 L1215.0,158.70 L1215.5,158.70 L1216.0,158.70 L1216.5,158.70 L1217.0,158.70 L1217.5,158.70 L1218.0,158.70 L1218.5,158.70 L1219.0,158.70 L1219.5,158.70 L1220.0,158.70 L1220.5,158.70 L1221.0,158.70 L1221.5,158.70 L1222.0,158.70 L1222.5,158.70 L1223.0,158.70 L1223.5,158.70 L1224.0,158.70 L1224.5,158.70 L1225.0,158.70 L1225.5,158.70 L1226.0,158.70 L1226.5,158.70 L1227.0,158.70 L1227.5,158.70 L1228.0,158.70 L1228.5,158.70 L1229.0,158.70 L1229.5,158.70 L1230.0,158.70 L1230.5,158.70 L1231.0,158.70 L1231.5,158.70 L1232.0,158.70 L1232.5,158.70 L1233.0,158.70 L1233.5,158.70 L1234.0,158.70 L1234.5,158.70 L1235.0,158.70 L1235.5,158.70 L1236.0,158.70 L1236.5,158.70 L1237.0,158.70 L1237.5,158.70 L1238.0,158.70 L1238.5,158.70 L1239.0,158.70 L1239.5,158.70 L1240.0,158.70 L1240.5,158.70 L1241.0,158.70 L1241.5,158.70 L1242.0,158.70 L1242.5,158.70 L1243.0,158.70 L1243.5,158.70 L1244.0,158.70 L1244.5,158.70 L1245.0,158.70 L1245.5,158.70 L1246.0,158.70 L1246.5,158.70 L1247.0,158.70 L1247.5,158.70 L1248.0,158.70 L1248.5,158.70 L1249.0,158.70 L1249.5,158.70 L1250.0,158.70 L1250.5,158.70 L1251.0,158.70 L1251.5,158.70 L1252.0,158.70 L1252.5,158.70 L1253.0,158.70 L1253.5,158.70 L1254.0,158.70 L1254.5,158.70 L1255.0,158.70 L1255.5,158.70 L1256.0,158.70 L1256.5,158.70 L1257.0,158.70 L1257.5,158.70 L1258.0,158.70 L1258.5,158.70 L1259.0,158.70 L1259.5,158.70 L1260.0,158.70 L1260.5,158.70 L1261.0,158.70 L1261.5,158.70 L1262.0,158.69 L1262.5,158.69 L1263.0,158.68 L1263.5,158.68 L1264.0,158.66 L1264.5,158.65 L1265.0,158.62 L1265.5,158.59 L1266.0,158.54 L1266.5,158.47 L1267.0,158.39 L1267.5,158.27 L1268.0,158.11 L1268.5,157.90 L1269.0,157.63 L1269.5,157.29 L1270.0,156.86 L1270.5,156.33 L1271.0,155.67 L1271.5,154.88 L1272.0,153.94 L1272.5,152.83 L1273.0,151.54 L1273.5,150.07 L1274.0,148.40 L1274.5,146.55 L1275.0,144.51 L1275.5,142.29 L1276.0,139.90 L1276.5,137.36 L1277.0,134.68 L1277.5,131.90 L1278.0,129.04 L1278.5,126.19 L1279.0,123.43 L1279.5,120.87 L1280.0,118.67 L1280.5,116.96 L1281.0,115.87 L1281.5,115.50 L1282.0,115.87" fill="none" stroke="#3434a8" stroke-width="1.35"/>
</g>
<path d="M735.5,157.5 L739.5,164 L731.5,164 Z" fill="#e02020" stroke="#000" stroke-width="1"/>
<rect x="190" y="37" width="2" height="135" fill="#000"/>
<rect x="190" y="37" width="1092" height="2" fill="#000"/>
<rect x="190" y="170.8" width="1092" height="1.4" fill="#222"/>
<rect x="187" y="158.0" width="3" height="1" fill="#999"/>
<text x="184" y="161.8" text-anchor="end" font-size="11" font-family="Liberation Sans, sans-serif" fill="#111" stroke="#111" stroke-width="0.15">0</text>
<rect x="187" y="125.3" width="3" height="1" fill="#999"/>
<text x="184" y="129.1" text-anchor="end" font-size="11" font-family="Liberation Sans, sans-serif" fill="#111" stroke="#111" stroke-width="0.15">2,000</text>
<rect x="187" y="92.6" width="3" height="1" fill="#999"/>
<text x="184" y="96.39999999999999" text-anchor="end" font-size="11" font-family="Liberation Sans, sans-serif" fill="#111" stroke="#111" stroke-width="0.15">4,000</text>
<rect x="187" y="59.1" width="3" height="1" fill="#999"/>
<text x="184" y="62.9" text-anchor="end" font-size="11" font-family="Liberation Sans, sans-serif" fill="#111" stroke="#111" stroke-width="0.15">6,000</text>
<text x="262.0" y="31.3" font-size="11" textLength="17.2" lengthAdjust="spacingAndGlyphs" font-family="Liberation Sans, sans-serif" fill="#111" stroke="#111" stroke-width="0.15">220</text>
<text x="352.9" y="31.3" font-size="11" textLength="17.2" lengthAdjust="spacingAndGlyphs" font-family="Liberation Sans, sans-serif" fill="#111" stroke="#111" stroke-width="0.15">225</text>
<text x="443.7" y="31.3" font-size="11" textLength="17.2" lengthAdjust="spacingAndGlyphs" font-family="Liberation Sans, sans-serif" fill="#111" stroke="#111" stroke-width="0.15">230</text>
<text x="534.5" y="31.3" font-size="11" textLength="17.2" lengthAdjust="spacingAndGlyphs" font-family="Liberation Sans, sans-serif" fill="#111" stroke="#111" stroke-width="0.15">235</text>
<text x="625.4" y="31.3" font-size="11" textLength="17.2" lengthAdjust="spacingAndGlyphs" font-family="Liberation Sans, sans-serif" fill="#111" stroke="#111" stroke-width="0.15">240</text>
<text x="716.2" y="31.3" font-size="11" textLength="17.2" lengthAdjust="spacingAndGlyphs" font-family="Liberation Sans, sans-serif" fill="#111" stroke="#111" stroke-width="0.15">245</text>
<text x="807.1" y="31.3" font-size="11" textLength="17.2" lengthAdjust="spacingAndGlyphs" font-family="Liberation Sans, sans-serif" fill="#111" stroke="#111" stroke-width="0.15">250</text>
<text x="897.9" y="31.3" font-size="11" textLength="17.2" lengthAdjust="spacingAndGlyphs" font-family="Liberation Sans, sans-serif" fill="#111" stroke="#111" stroke-width="0.15">255</text>
<text x="988.8" y="31.3" font-size="11" textLength="17.2" lengthAdjust="spacingAndGlyphs" font-family="Liberation Sans, sans-serif" fill="#111" stroke="#111" stroke-width="0.15">260</text>
<text x="1079.7" y="31.3" font-size="11" textLength="17.2" lengthAdjust="spacingAndGlyphs" font-family="Liberation Sans, sans-serif" fill="#111" stroke="#111" stroke-width="0.15">265</text>
<text x="1170.5" y="31.3" font-size="11" textLength="17.2" lengthAdjust="spacingAndGlyphs" font-family="Liberation Sans, sans-serif" fill="#111" stroke="#111" stroke-width="0.15">270</text>
<text x="1261.3" y="31.3" font-size="11" textLength="17.2" lengthAdjust="spacingAndGlyphs" font-family="Liberation Sans, sans-serif" fill="#111" stroke="#111" stroke-width="0.15">275</text>
<rect x="222.7" y="38.8" width="37.3" height="3.6" fill="#0000a8"/>
<rect x="222.7" y="167.3" width="37.3" height="3.8" fill="#0000a8"/>
<rect x="370.8" y="38.8" width="36.4" height="3.6" fill="#0000a8"/>
<rect x="370.8" y="167.3" width="36.4" height="3.8" fill="#0000a8"/>
<rect x="572.4" y="38.8" width="36.3" height="3.6" fill="#0000a8"/>
<rect x="572.4" y="167.3" width="36.3" height="3.8" fill="#0000a8"/>
<rect x="717.2" y="38.8" width="37.5" height="3.6" fill="#0000a8"/>
<rect x="717.2" y="167.3" width="37.5" height="3.8" fill="#0000a8"/>
<rect x="855" y="38.8" width="37.6" height="3.6" fill="#0000a8"/>
<rect x="855" y="167.3" width="37.6" height="3.8" fill="#0000a8"/>
<rect x="984.3" y="38.8" width="37.5" height="3.6" fill="#0000a8"/>
<rect x="984.3" y="167.3" width="37.5" height="3.8" fill="#0000a8"/>
<rect x="1120.3" y="38.8" width="37.7" height="3.6" fill="#0000a8"/>
<rect x="1120.3" y="167.3" width="37.7" height="3.8" fill="#0000a8"/>
<rect x="1260.3" y="38.8" width="21.7" height="3.6" fill="#0000a8"/>
<rect x="1260.3" y="167.3" width="21.7" height="3.8" fill="#0000a8"/>
<clipPath id="cp2"><rect x="0" y="0" width="1305" height="600"/></clipPath>
<g clip-path="url(#cp2)">
<rect x="208.2" y="174" width="66.5" height="14.5" fill="#ffff1e" stroke="#6a9a2a" stroke-width="1"/>
<text x="210.0" y="185.9" font-size="11.6" textLength="62.5" lengthAdjust="spacingAndGlyphs" font-family="Liberation Sans, sans-serif" fill="#111" stroke="#111" stroke-width="0.15">DMD_exon43</text>
<rect x="355.3" y="174" width="66.5" height="14.5" fill="#ffff1e" stroke="#6a9a2a" stroke-width="1"/>
<text x="357.1" y="185.9" font-size="11.6" textLength="62.5" lengthAdjust="spacingAndGlyphs" font-family="Liberation Sans, sans-serif" fill="#111" stroke="#111" stroke-width="0.15">DMD_exon23</text>
<rect x="556.9" y="174" width="66.5" height="14.5" fill="#ffff1e" stroke="#6a9a2a" stroke-width="1"/>
<text x="558.6999999999999" y="185.9" font-size="11.6" textLength="62.5" lengthAdjust="spacingAndGlyphs" font-family="Liberation Sans, sans-serif" fill="#111" stroke="#111" stroke-width="0.15">DMD_exon63</text>
<rect x="701.8" y="174" width="66.5" height="14.5" fill="#ffff1e" stroke="#6a9a2a" stroke-width="1"/>
<text x="703.5999999999999" y="185.9" font-size="11.6" textLength="62.5" lengthAdjust="spacingAndGlyphs" font-family="Liberation Sans, sans-serif" fill="#111" stroke="#111" stroke-width="0.15">DMD_exon04</text>
<rect x="841.1" y="174" width="66.5" height="14.5" fill="#ffff1e" stroke="#6a9a2a" stroke-width="1"/>
<text x="842.9" y="185.9" font-size="11.6" textLength="62.5" lengthAdjust="spacingAndGlyphs" font-family="Liberation Sans, sans-serif" fill="#111" stroke="#111" stroke-width="0.15">DMD_exon44</text>
<rect x="969.9" y="174" width="66.5" height="14.5" fill="#ffff1e" stroke="#6a9a2a" stroke-width="1"/>
<text x="971.6999999999999" y="185.9" font-size="11.6" textLength="62.5" lengthAdjust="spacingAndGlyphs" font-family="Liberation Sans, sans-serif" fill="#111" stroke="#111" stroke-width="0.15">DMD_exon24</text>
<rect x="1106.1" y="174" width="66.5" height="14.5" fill="#ffff1e" stroke="#6a9a2a" stroke-width="1"/>
<text x="1107.8999999999999" y="185.9" font-size="11.6" textLength="62.5" lengthAdjust="spacingAndGlyphs" font-family="Liberation Sans, sans-serif" fill="#111" stroke="#111" stroke-width="0.15">DMD_exon64</text>
<rect x="1247.2" y="174" width="66.5" height="14.5" fill="#ffff1e" stroke="#6a9a2a" stroke-width="1"/>
<text x="1249.0" y="185.9" font-size="11.6" textLength="56" lengthAdjust="spacingAndGlyphs" font-family="Liberation Sans, sans-serif" fill="#111" stroke="#111" stroke-width="0.15">MECP2_gen</text>
</g>
<text x="650" y="201.6" font-size="11.2" textLength="128.8" lengthAdjust="spacingAndGlyphs" font-family="Liberation Sans, sans-serif" fill="#2e2e90" stroke="#2e2e90" stroke-width="0.15">MLPA -- Dosage Histogram</text>
<rect x="190" y="209" width="1092" height="1.3" fill="#111"/>
<rect x="1281.2" y="209" width="1.2" height="47" fill="#111"/>
<rect x="189.5" y="209" width="2" height="48" fill="#000"/>
<rect x="237" y="219.2" width="9.3" height="35.8" fill="#0000f4"/>
<rect x="383.7" y="221.2" width="9.5" height="33.8" fill="#0000f4"/>
<rect x="586.1" y="219.2" width="9.8" height="35.8" fill="#0000f4"/>
<rect x="731.2" y="238.8" width="9.6" height="16.2" fill="#0000f4"/>
<rect x="869" y="228.4" width="10.0" height="26.6" fill="#0000f4"/>
<rect x="998.2" y="223.1" width="10.0" height="31.9" fill="#0000f4"/>
<rect x="1134.1" y="221.1" width="10.1" height="33.9" fill="#0000f4"/>
<rect x="1274" y="217" width="10.0" height="38.0" fill="#0000f4"/>
<rect x="189.5" y="254.3" width="1093" height="2.6" fill="#000"/>
<rect x="186" y="222" width="4" height="1" fill="#333"/>
<text x="184" y="226.5" text-anchor="end" font-size="11" font-family="Liberation Sans, sans-serif" fill="#111" stroke="#111" stroke-width="0.15">1</text>
<text x="184" y="260" text-anchor="end" font-size="11" font-family="Liberation Sans, sans-serif" fill="#111" stroke="#111" stroke-width="0.15">0</text>
<rect x="126" y="258.6" width="1179" height="4" fill="#d6d3cc"/>
<rect x="126" y="262.6" width="1178" height="1.4" fill="#474747"/>
<rect x="126.2" y="262.6" width="1.4" height="318.4" fill="#555"/>
<rect x="713.9" y="263" width="1.5" height="317" fill="#9a9a9a"/>
<rect x="1302.2" y="263" width="1.5" height="317" fill="#a4a4a4"/>
<rect x="126" y="579.8" width="1177" height="1" fill="#d8d8d8"/>
<text x="144.7" y="281.8" font-size="11" textLength="105" lengthAdjust="spacingAndGlyphs" font-family="Liberation Sans, sans-serif" fill="#2e2e90" stroke="#2e2e90" stroke-width="0.15">NORMAL FEMALE.fsa</text>
<line x1="182" y1="528.9" x2="690.7" y2="528.9" stroke="#7c7c7c" stroke-width="1.2" stroke-dasharray="3,2.95" stroke-dashoffset="2.3"/>
<line x1="182" y1="511.8" x2="690.7" y2="511.8" stroke="#7c7c7c" stroke-width="1.2" stroke-dasharray="3,2.95" stroke-dashoffset="2.3"/>
<line x1="182" y1="494.8" x2="690.7" y2="494.8" stroke="#7c7c7c" stroke-width="1.2" stroke-dasharray="3,2.95" stroke-dashoffset="2.3"/>
<line x1="182" y1="477.7" x2="690.7" y2="477.7" stroke="#7c7c7c" stroke-width="1.2" stroke-dasharray="3,2.95" stroke-dashoffset="2.3"/>
<line x1="182" y1="460.7" x2="690.7" y2="460.7" stroke="#7c7c7c" stroke-width="1.2" stroke-dasharray="3,2.95" stroke-dashoffset="2.3"/>
<line x1="182" y1="443.6" x2="690.7" y2="443.6" stroke="#7c7c7c" stroke-width="1.2" stroke-dasharray="3,2.95" stroke-dashoffset="2.3"/>
<line x1="182" y1="426.5" x2="690.7" y2="426.5" stroke="#7c7c7c" stroke-width="1.2" stroke-dasharray="3,2.95" stroke-dashoffset="2.3"/>
<line x1="182" y1="409.5" x2="690.7" y2="409.5" stroke="#7c7c7c" stroke-width="1.2" stroke-dasharray="3,2.95" stroke-dashoffset="2.3"/>
<line x1="182" y1="392.4" x2="690.7" y2="392.4" stroke="#7c7c7c" stroke-width="1.2" stroke-dasharray="3,2.95" stroke-dashoffset="2.3"/>
<line x1="182" y1="375.4" x2="690.7" y2="375.4" stroke="#7c7c7c" stroke-width="1.2" stroke-dasharray="3,2.95" stroke-dashoffset="2.3"/>
<line x1="182" y1="358.3" x2="690.7" y2="358.3" stroke="#7c7c7c" stroke-width="1.2" stroke-dasharray="3,2.95" stroke-dashoffset="2.3"/>
<line x1="182" y1="341.2" x2="690.7" y2="341.2" stroke="#7c7c7c" stroke-width="1.2" stroke-dasharray="3,2.95" stroke-dashoffset="2.3"/>
<line x1="182" y1="324.2" x2="690.7" y2="324.2" stroke="#7c7c7c" stroke-width="1.2" stroke-dasharray="3,2.95" stroke-dashoffset="2.3"/>
<line x1="182" y1="307.1" x2="690.7" y2="307.1" stroke="#7c7c7c" stroke-width="1.2" stroke-dasharray="3,2.95" stroke-dashoffset="2.3"/>
<line x1="226.0" y1="291" x2="226.0" y2="545" stroke="#7c7c7c" stroke-width="1.3" stroke-dasharray="3,3" stroke-dashoffset="2.4"/>
<line x1="276.8" y1="291" x2="276.8" y2="545" stroke="#7c7c7c" stroke-width="1.3" stroke-dasharray="3,3" stroke-dashoffset="2.4"/>
<line x1="327.6" y1="291" x2="327.6" y2="545" stroke="#7c7c7c" stroke-width="1.3" stroke-dasharray="3,3" stroke-dashoffset="2.4"/>
<line x1="378.3" y1="291" x2="378.3" y2="545" stroke="#7c7c7c" stroke-width="1.3" stroke-dasharray="3,3" stroke-dashoffset="2.4"/>
<line x1="429.1" y1="291" x2="429.1" y2="545" stroke="#7c7c7c" stroke-width="1.3" stroke-dasharray="3,3" stroke-dashoffset="2.4"/>
<line x1="479.9" y1="291" x2="479.9" y2="545" stroke="#7c7c7c" stroke-width="1.3" stroke-dasharray="3,3" stroke-dashoffset="2.4"/>
<line x1="530.7" y1="291" x2="530.7" y2="545" stroke="#7c7c7c" stroke-width="1.3" stroke-dasharray="3,3" stroke-dashoffset="2.4"/>
<line x1="581.4" y1="291" x2="581.4" y2="545" stroke="#7c7c7c" stroke-width="1.3" stroke-dasharray="3,3" stroke-dashoffset="2.4"/>
<line x1="632.2" y1="291" x2="632.2" y2="545" stroke="#7c7c7c" stroke-width="1.3" stroke-dasharray="3,3" stroke-dashoffset="2.4"/>
<line x1="683.0" y1="291" x2="683.0" y2="545" stroke="#7c7c7c" stroke-width="1.3" stroke-dasharray="3,3" stroke-dashoffset="2.4"/>
<rect x="180" y="289.5" width="510.7" height="1.3" fill="#333"/>
<rect x="689.8000000000001" y="290" width="1.8" height="256" fill="#2a2a2a"/>
<rect x="178.8" y="289.5" width="2.4" height="256" fill="#000"/>
<rect x="179" y="544" width="511.7" height="2.1" fill="#000"/>
<rect x="176" y="545.5" width="3" height="1" fill="#555"/>
<text x="173.5" y="550.0" text-anchor="end" font-size="11" font-family="Liberation Sans, sans-serif" fill="#111" stroke="#111" stroke-width="0.15">-0.2</text>
<rect x="176" y="528.4" width="3" height="1" fill="#555"/>
<text x="173.5" y="532.9" text-anchor="end" font-size="11" font-family="Liberation Sans, sans-serif" fill="#111" stroke="#111" stroke-width="0.15">0</text>
<rect x="176" y="511.3" width="3" height="1" fill="#555"/>
<text x="173.5" y="515.8" text-anchor="end" font-size="11" font-family="Liberation Sans, sans-serif" fill="#111" stroke="#111" stroke-width="0.15">0.2</text>
<rect x="176" y="494.3" width="3" height="1" fill="#555"/>
<text x="173.5" y="498.8" text-anchor="end" font-size="11" font-family="Liberation Sans, sans-serif" fill="#111" stroke="#111" stroke-width="0.15">0.4</text>
<rect x="176" y="477.2" width="3" height="1" fill="#555"/>
<text x="173.5" y="481.7" text-anchor="end" font-size="11" font-family="Liberation Sans, sans-serif" fill="#111" stroke="#111" stroke-width="0.15">0.6</text>
<rect x="176" y="460.2" width="3" height="1" fill="#555"/>
<text x="173.5" y="464.7" text-anchor="end" font-size="11" font-family="Liberation Sans, sans-serif" fill="#111" stroke="#111" stroke-width="0.15">0.8</text>
<rect x="176" y="443.1" width="3" height="1" fill="#555"/>
<text x="173.5" y="447.6" text-anchor="end" font-size="11" font-family="Liberation Sans, sans-serif" fill="#111" stroke="#111" stroke-width="0.15">1</text>
<rect x="176" y="426.0" width="3" height="1" fill="#555"/>
<text x="173.5" y="430.5" text-anchor="end" font-size="11" font-family="Liberation Sans, sans-serif" fill="#111" stroke="#111" stroke-width="0.15">1.2</text>
<rect x="176" y="409.0" width="3" height="1" fill="#555"/>
<text x="173.5" y="413.5" text-anchor="end" font-size="11" font-family="Liberation Sans, sans-serif" fill="#111" stroke="#111" stroke-width="0.15">1.4</text>
<rect x="176" y="391.9" width="3" height="1" fill="#555"/>
<text x="173.5" y="396.4" text-anchor="end" font-size="11" font-family="Liberation Sans, sans-serif" fill="#111" stroke="#111" stroke-width="0.15">1.6</text>
<rect x="176" y="374.9" width="3" height="1" fill="#555"/>
<text x="173.5" y="379.4" text-anchor="end" font-size="11" font-family="Liberation Sans, sans-serif" fill="#111" stroke="#111" stroke-width="0.15">1.8</text>
<rect x="176" y="357.8" width="3" height="1" fill="#555"/>
<text x="173.5" y="362.3" text-anchor="end" font-size="11" font-family="Liberation Sans, sans-serif" fill="#111" stroke="#111" stroke-width="0.15">2</text>
<rect x="176" y="340.7" width="3" height="1" fill="#555"/>
<text x="173.5" y="345.2" text-anchor="end" font-size="11" font-family="Liberation Sans, sans-serif" fill="#111" stroke="#111" stroke-width="0.15">2.2</text>
<rect x="176" y="323.7" width="3" height="1" fill="#555"/>
<text x="173.5" y="328.2" text-anchor="end" font-size="11" font-family="Liberation Sans, sans-serif" fill="#111" stroke="#111" stroke-width="0.15">2.4</text>
<rect x="176" y="306.6" width="3" height="1" fill="#555"/>
<text x="173.5" y="311.1" text-anchor="end" font-size="11" font-family="Liberation Sans, sans-serif" fill="#111" stroke="#111" stroke-width="0.15">2.6</text>
<rect x="187.4" y="546" width="1" height="2" fill="#777"/>
<rect x="200.1" y="546" width="1" height="2" fill="#777"/>
<rect x="212.8" y="546" width="1" height="2" fill="#777"/>
<rect x="225.5" y="546" width="1" height="2" fill="#777"/>
<rect x="238.2" y="546" width="1" height="2" fill="#777"/>
<rect x="250.9" y="546" width="1" height="2" fill="#777"/>
<rect x="263.6" y="546" width="1" height="2" fill="#777"/>
<rect x="276.3" y="546" width="1" height="2" fill="#777"/>
<rect x="289.0" y="546" width="1" height="2" fill="#777"/>
<rect x="301.7" y="546" width="1" height="2" fill="#777"/>
<rect x="314.4" y="546" width="1" height="2" fill="#777"/>
<rect x="327.1" y="546" width="1" height="2" fill="#777"/>
<rect x="339.8" y="546" width="1" height="2" fill="#777"/>
<rect x="352.4" y="546" width="1" height="2" fill="#777"/>
<rect x="365.1" y="546" width="1" height="2" fill="#777"/>
<rect x="377.8" y="546" width="1" height="2" fill="#777"/>
<rect x="390.5" y="546" width="1" height="2" fill="#777"/>
<rect x="403.2" y="546" width="1" height="2" fill="#777"/>
<rect x="415.9" y="546" width="1" height="2" fill="#777"/>
<rect x="428.6" y="546" width="1" height="2" fill="#777"/>
<rect x="441.3" y="546" width="1" height="2" fill="#777"/>
<rect x="454.0" y="546" width="1" height="2" fill="#777"/>
<rect x="466.7" y="546" width="1" height="2" fill="#777"/>
<rect x="479.4" y="546" width="1" height="2" fill="#777"/>
<rect x="492.1" y="546" width="1" height="2" fill="#777"/>
<rect x="504.8" y="546" width="1" height="2" fill="#777"/>
<rect x="517.5" y="546" width="1" height="2" fill="#777"/>
<rect x="530.2" y="546" width="1" height="2" fill="#777"/>
<rect x="542.9" y="546" width="1" height="2" fill="#777"/>
<rect x="555.6" y="546" width="1" height="2" fill="#777"/>
<rect x="568.2" y="546" width="1" height="2" fill="#777"/>
<rect x="580.9" y="546" width="1" height="2" fill="#777"/>
<rect x="593.6" y="546" width="1" height="2" fill="#777"/>
<rect x="606.3" y="546" width="1" height="2" fill="#777"/>
<rect x="619.0" y="546" width="1" height="2" fill="#777"/>
<rect x="631.7" y="546" width="1" height="2" fill="#777"/>
<rect x="644.4" y="546" width="1" height="2" fill="#777"/>
<rect x="657.1" y="546" width="1" height="2" fill="#777"/>
<rect x="669.8" y="546" width="1" height="2" fill="#777"/>
<rect x="682.5" y="546" width="1" height="2" fill="#777"/>
<text x="216.5" y="562.2" font-size="11" textLength="17" lengthAdjust="spacingAndGlyphs" font-family="Liberation Sans, sans-serif" fill="#111" stroke="#111" stroke-width="0.15">100</text>
<text x="267.3" y="562.2" font-size="11" textLength="17" lengthAdjust="spacingAndGlyphs" font-family="Liberation Sans, sans-serif" fill="#111" stroke="#111" stroke-width="0.15">150</text>
<text x="318.1" y="562.2" font-size="11" textLength="17" lengthAdjust="spacingAndGlyphs" font-family="Liberation Sans, sans-serif" fill="#111" stroke="#111" stroke-width="0.15">200</text>
<text x="368.8" y="562.2" font-size="11" textLength="17" lengthAdjust="spacingAndGlyphs" font-family="Liberation Sans, sans-serif" fill="#111" stroke="#111" stroke-width="0.15">250</text>
<text x="419.6" y="562.2" font-size="11" textLength="17" lengthAdjust="spacingAndGlyphs" font-family="Liberation Sans, sans-serif" fill="#111" stroke="#111" stroke-width="0.15">300</text>
<text x="470.4" y="562.2" font-size="11" textLength="17" lengthAdjust="spacingAndGlyphs" font-family="Liberation Sans, sans-serif" fill="#111" stroke="#111" stroke-width="0.15">350</text>
<text x="521.2" y="562.2" font-size="11" textLength="17" lengthAdjust="spacingAndGlyphs" font-family="Liberation Sans, sans-serif" fill="#111" stroke="#111" stroke-width="0.15">400</text>
<text x="571.9" y="562.2" font-size="11" textLength="17" lengthAdjust="spacingAndGlyphs" font-family="Liberation Sans, sans-serif" fill="#111" stroke="#111" stroke-width="0.15">450</text>
<text x="622.7" y="562.2" font-size="11" textLength="17" lengthAdjust="spacingAndGlyphs" font-family="Liberation Sans, sans-serif" fill="#111" stroke="#111" stroke-width="0.15">500</text>
<text x="673.5" y="562.2" font-size="11" textLength="17" lengthAdjust="spacingAndGlyphs" font-family="Liberation Sans, sans-serif" fill="#111" stroke="#111" stroke-width="0.15">550</text>
<text x="434.4" y="571.8" text-anchor="middle" font-size="11" font-family="Liberation Sans, sans-serif" fill="#111" stroke="#111" stroke-width="0.15">Size (bps)</text>
<text transform="translate(151.5,417.5) rotate(-90)" text-anchor="middle" font-size="11" font-family="Liberation Sans, sans-serif" fill="#111" stroke="#111" stroke-width="0.15">Peak Ratio</text>
<rect x="252.5" y="417" width="365" height="2" fill="#5e9c8c"/>
<rect x="252.5" y="464" width="365" height="2" fill="#5e9c8c"/>
<rect x="250.7" y="441.5" width="4" height="4" fill="#1ea01e" stroke="#002a00" stroke-width="1.3"/>
<rect x="252.0" y="442.8" width="1.4" height="1.4" fill="#90ff90"/>
<rect x="260.7" y="441.5" width="4" height="4" fill="#1ea01e" stroke="#002a00" stroke-width="1.3"/>
<rect x="262.0" y="442.8" width="1.4" height="1.4" fill="#90ff90"/>
<rect x="268.4" y="441.5" width="4" height="4" fill="#1ea01e" stroke="#002a00" stroke-width="1.3"/>
<rect x="269.7" y="442.8" width="1.4" height="1.4" fill="#90ff90"/>
<rect x="278.6" y="441.5" width="4" height="4" fill="#1ea01e" stroke="#002a00" stroke-width="1.3"/>
<rect x="279.9" y="442.8" width="1.4" height="1.4" fill="#90ff90"/>
<rect x="286.4" y="441.5" width="4" height="4" fill="#1ea01e" stroke="#002a00" stroke-width="1.3"/>
<rect x="287.7" y="442.8" width="1.4" height="1.4" fill="#90ff90"/>
<rect x="294.8" y="441.5" width="4" height="4" fill="#1ea01e" stroke="#002a00" stroke-width="1.3"/>
<rect x="296.1" y="442.8" width="1.4" height="1.4" fill="#90ff90"/>
<rect x="304.4" y="441.5" width="4" height="4" fill="#1ea01e" stroke="#002a00" stroke-width="1.3"/>
<rect x="305.7" y="442.8" width="1.4" height="1.4" fill="#90ff90"/>
<rect x="311.4" y="441.5" width="4" height="4" fill="#1ea01e" stroke="#002a00" stroke-width="1.3"/>
<rect x="312.7" y="442.8" width="1.4" height="1.4" fill="#90ff90"/>
<rect x="319.2" y="441.5" width="4" height="4" fill="#1ea01e" stroke="#002a00" stroke-width="1.3"/>
<rect x="320.6" y="442.8" width="1.4" height="1.4" fill="#90ff90"/>
<rect x="329.5" y="441.5" width="4" height="4" fill="#1ea01e" stroke="#002a00" stroke-width="1.3"/>
<rect x="330.8" y="442.8" width="1.4" height="1.4" fill="#90ff90"/>
<rect x="336.2" y="441.5" width="4" height="4" fill="#1ea01e" stroke="#002a00" stroke-width="1.3"/>
<rect x="337.5" y="442.8" width="1.4" height="1.4" fill="#90ff90"/>
<rect x="344.2" y="441.5" width="4" height="4" fill="#1ea01e" stroke="#002a00" stroke-width="1.3"/>
<rect x="345.6" y="442.8" width="1.4" height="1.4" fill="#90ff90"/>
<rect x="352.3" y="441.5" width="4" height="4" fill="#1ea01e" stroke="#002a00" stroke-width="1.3"/>
<rect x="353.6" y="442.8" width="1.4" height="1.4" fill="#90ff90"/>
<rect x="364.0" y="441.5" width="4" height="4" fill="#1ea01e" stroke="#002a00" stroke-width="1.3"/>
<rect x="365.3" y="442.8" width="1.4" height="1.4" fill="#90ff90"/>
<rect x="371.9" y="441.5" width="4" height="4" fill="#e0e060" stroke="#1a1a00" stroke-width="1.3"/>
<rect x="373.2" y="442.8" width="1.4" height="1.4" fill="#ffffb0"/>
<rect x="380.2" y="441.5" width="4" height="4" fill="#1ea01e" stroke="#002a00" stroke-width="1.3"/>
<rect x="381.5" y="442.8" width="1.4" height="1.4" fill="#90ff90"/>
<rect x="387.0" y="441.5" width="4" height="4" fill="#1ea01e" stroke="#002a00" stroke-width="1.3"/>
<rect x="388.3" y="442.8" width="1.4" height="1.4" fill="#90ff90"/>
<rect x="394.0" y="441.5" width="4" height="4" fill="#1ea01e" stroke="#002a00" stroke-width="1.3"/>
<rect x="395.3" y="442.8" width="1.4" height="1.4" fill="#90ff90"/>
<rect x="402.0" y="441.5" width="4" height="4" fill="#1ea01e" stroke="#002a00" stroke-width="1.3"/>
<rect x="403.3" y="442.8" width="1.4" height="1.4" fill="#90ff90"/>
<rect x="409.4" y="441.5" width="4" height="4" fill="#1ea01e" stroke="#002a00" stroke-width="1.3"/>
<rect x="410.7" y="442.8" width="1.4" height="1.4" fill="#90ff90"/>
<rect x="416.6" y="441.5" width="4" height="4" fill="#1ea01e" stroke="#002a00" stroke-width="1.3"/>
<rect x="417.9" y="442.8" width="1.4" height="1.4" fill="#90ff90"/>
<rect x="425.5" y="441.5" width="4" height="4" fill="#1ea01e" stroke="#002a00" stroke-width="1.3"/>
<rect x="426.8" y="442.8" width="1.4" height="1.4" fill="#90ff90"/>
<rect x="433.5" y="441.5" width="4" height="4" fill="#1ea01e" stroke="#002a00" stroke-width="1.3"/>
<rect x="434.8" y="442.8" width="1.4" height="1.4" fill="#90ff90"/>
<rect x="442.6" y="441.5" width="4" height="4" fill="#1ea01e" stroke="#002a00" stroke-width="1.3"/>
<rect x="443.9" y="442.8" width="1.4" height="1.4" fill="#90ff90"/>
<rect x="449.4" y="441.5" width="4" height="4" fill="#1ea01e" stroke="#002a00" stroke-width="1.3"/>
<rect x="450.7" y="442.8" width="1.4" height="1.4" fill="#90ff90"/>
<rect x="456.3" y="441.5" width="4" height="4" fill="#1ea01e" stroke="#002a00" stroke-width="1.3"/>
<rect x="457.6" y="442.8" width="1.4" height="1.4" fill="#90ff90"/>
<rect x="467.4" y="441.5" width="4" height="4" fill="#1ea01e" stroke="#002a00" stroke-width="1.3"/>
<rect x="468.7" y="442.8" width="1.4" height="1.4" fill="#90ff90"/>
<rect x="481.6" y="441.5" width="4" height="4" fill="#1ea01e" stroke="#002a00" stroke-width="1.3"/>
<rect x="482.9" y="442.8" width="1.4" height="1.4" fill="#90ff90"/>
<rect x="488.2" y="441.5" width="4" height="4" fill="#1ea01e" stroke="#002a00" stroke-width="1.3"/>
<rect x="489.5" y="442.8" width="1.4" height="1.4" fill="#90ff90"/>
<rect x="496.8" y="441.5" width="4" height="4" fill="#1ea01e" stroke="#002a00" stroke-width="1.3"/>
<rect x="498.1" y="442.8" width="1.4" height="1.4" fill="#90ff90"/>
<rect x="504.9" y="441.5" width="4" height="4" fill="#1ea01e" stroke="#002a00" stroke-width="1.3"/>
<rect x="506.2" y="442.8" width="1.4" height="1.4" fill="#90ff90"/>
<rect x="512.9" y="441.5" width="4" height="4" fill="#1ea01e" stroke="#002a00" stroke-width="1.3"/>
<rect x="514.2" y="442.8" width="1.4" height="1.4" fill="#90ff90"/>
<rect x="521.8" y="441.5" width="4" height="4" fill="#1ea01e" stroke="#002a00" stroke-width="1.3"/>
<rect x="523.0" y="442.8" width="1.4" height="1.4" fill="#90ff90"/>
<rect x="529.9" y="441.5" width="4" height="4" fill="#1ea01e" stroke="#002a00" stroke-width="1.3"/>
<rect x="531.2" y="442.8" width="1.4" height="1.4" fill="#90ff90"/>
<rect x="536.9" y="441.5" width="4" height="4" fill="#1ea01e" stroke="#002a00" stroke-width="1.3"/>
<rect x="538.2" y="442.8" width="1.4" height="1.4" fill="#90ff90"/>
<rect x="544.7" y="441.5" width="4" height="4" fill="#1ea01e" stroke="#002a00" stroke-width="1.3"/>
<rect x="546.0" y="442.8" width="1.4" height="1.4" fill="#90ff90"/>
<rect x="552.5" y="441.5" width="4" height="4" fill="#1ea01e" stroke="#002a00" stroke-width="1.3"/>
<rect x="553.8" y="442.8" width="1.4" height="1.4" fill="#90ff90"/>
<rect x="560.5" y="441.5" width="4" height="4" fill="#1ea01e" stroke="#002a00" stroke-width="1.3"/>
<rect x="561.8" y="442.8" width="1.4" height="1.4" fill="#90ff90"/>
<rect x="569.5" y="441.5" width="4" height="4" fill="#1ea01e" stroke="#002a00" stroke-width="1.3"/>
<rect x="570.8" y="442.8" width="1.4" height="1.4" fill="#90ff90"/>
<rect x="577.5" y="441.5" width="4" height="4" fill="#1ea01e" stroke="#002a00" stroke-width="1.3"/>
<rect x="578.8" y="442.8" width="1.4" height="1.4" fill="#90ff90"/>
<rect x="586.3" y="441.5" width="4" height="4" fill="#1ea01e" stroke="#002a00" stroke-width="1.3"/>
<rect x="587.6" y="442.8" width="1.4" height="1.4" fill="#90ff90"/>
<rect x="592.4" y="441.5" width="4" height="4" fill="#1ea01e" stroke="#002a00" stroke-width="1.3"/>
<rect x="593.7" y="442.8" width="1.4" height="1.4" fill="#90ff90"/>
<rect x="602.0" y="441.5" width="4" height="4" fill="#1ea01e" stroke="#002a00" stroke-width="1.3"/>
<rect x="603.3" y="442.8" width="1.4" height="1.4" fill="#90ff90"/>
<rect x="609.2" y="441.5" width="4" height="4" fill="#1ea01e" stroke="#002a00" stroke-width="1.3"/>
<rect x="610.5" y="442.8" width="1.4" height="1.4" fill="#90ff90"/>
<rect x="616.0" y="441.5" width="4" height="4" fill="#1ea01e" stroke="#002a00" stroke-width="1.3"/>
<rect x="617.3" y="442.8" width="1.4" height="1.4" fill="#90ff90"/>
<path d="M678.1,542.2 L687.7,532.8 L687.7,542.2 Z" fill="#228a22" stroke="#000" stroke-width="1.1" stroke-linejoin="miter"/>
<line x1="770" y1="528.9" x2="1278.7" y2="528.9" stroke="#7c7c7c" stroke-width="1.2" stroke-dasharray="3,2.95" stroke-dashoffset="2.3"/>
<line x1="770" y1="511.8" x2="1278.7" y2="511.8" stroke="#7c7c7c" stroke-width="1.2" stroke-dasharray="3,2.95" stroke-dashoffset="2.3"/>
<line x1="770" y1="494.8" x2="1278.7" y2="494.8" stroke="#7c7c7c" stroke-width="1.2" stroke-dasharray="3,2.95" stroke-dashoffset="2.3"/>
<line x1="770" y1="477.7" x2="1278.7" y2="477.7" stroke="#7c7c7c" stroke-width="1.2" stroke-dasharray="3,2.95" stroke-dashoffset="2.3"/>
<line x1="770" y1="460.7" x2="1278.7" y2="460.7" stroke="#7c7c7c" stroke-width="1.2" stroke-dasharray="3,2.95" stroke-dashoffset="2.3"/>
<line x1="770" y1="443.6" x2="1278.7" y2="443.6" stroke="#7c7c7c" stroke-width="1.2" stroke-dasharray="3,2.95" stroke-dashoffset="2.3"/>
<line x1="770" y1="426.5" x2="1278.7" y2="426.5" stroke="#7c7c7c" stroke-width="1.2" stroke-dasharray="3,2.95" stroke-dashoffset="2.3"/>
<line x1="770" y1="409.5" x2="1278.7" y2="409.5" stroke="#7c7c7c" stroke-width="1.2" stroke-dasharray="3,2.95" stroke-dashoffset="2.3"/>
<line x1="770" y1="392.4" x2="1278.7" y2="392.4" stroke="#7c7c7c" stroke-width="1.2" stroke-dasharray="3,2.95" stroke-dashoffset="2.3"/>
<line x1="770" y1="375.4" x2="1278.7" y2="375.4" stroke="#7c7c7c" stroke-width="1.2" stroke-dasharray="3,2.95" stroke-dashoffset="2.3"/>
<line x1="770" y1="358.3" x2="1278.7" y2="358.3" stroke="#7c7c7c" stroke-width="1.2" stroke-dasharray="3,2.95" stroke-dashoffset="2.3"/>
<line x1="770" y1="341.2" x2="1278.7" y2="341.2" stroke="#7c7c7c" stroke-width="1.2" stroke-dasharray="3,2.95" stroke-dashoffset="2.3"/>
<line x1="770" y1="324.2" x2="1278.7" y2="324.2" stroke="#7c7c7c" stroke-width="1.2" stroke-dasharray="3,2.95" stroke-dashoffset="2.3"/>
<line x1="770" y1="307.1" x2="1278.7" y2="307.1" stroke="#7c7c7c" stroke-width="1.2" stroke-dasharray="3,2.95" stroke-dashoffset="2.3"/>
<line x1="814.0" y1="291" x2="814.0" y2="545" stroke="#7c7c7c" stroke-width="1.3" stroke-dasharray="3,3" stroke-dashoffset="2.4"/>
<line x1="864.8" y1="291" x2="864.8" y2="545" stroke="#7c7c7c" stroke-width="1.3" stroke-dasharray="3,3" stroke-dashoffset="2.4"/>
<line x1="915.6" y1="291" x2="915.6" y2="545" stroke="#7c7c7c" stroke-width="1.3" stroke-dasharray="3,3" stroke-dashoffset="2.4"/>
<line x1="966.3" y1="291" x2="966.3" y2="545" stroke="#7c7c7c" stroke-width="1.3" stroke-dasharray="3,3" stroke-dashoffset="2.4"/>
<line x1="1017.1" y1="291" x2="1017.1" y2="545" stroke="#7c7c7c" stroke-width="1.3" stroke-dasharray="3,3" stroke-dashoffset="2.4"/>
<line x1="1067.9" y1="291" x2="1067.9" y2="545" stroke="#7c7c7c" stroke-width="1.3" stroke-dasharray="3,3" stroke-dashoffset="2.4"/>
<line x1="1118.7" y1="291" x2="1118.7" y2="545" stroke="#7c7c7c" stroke-width="1.3" stroke-dasharray="3,3" stroke-dashoffset="2.4"/>
<line x1="1169.4" y1="291" x2="1169.4" y2="545" stroke="#7c7c7c" stroke-width="1.3" stroke-dasharray="3,3" stroke-dashoffset="2.4"/>
<line x1="1220.2" y1="291" x2="1220.2" y2="545" stroke="#7c7c7c" stroke-width="1.3" stroke-dasharray="3,3" stroke-dashoffset="2.4"/>
<line x1="1271.0" y1="291" x2="1271.0" y2="545" stroke="#7c7c7c" stroke-width="1.3" stroke-dasharray="3,3" stroke-dashoffset="2.4"/>
<rect x="768" y="289.5" width="510.7" height="1.3" fill="#333"/>
<rect x="1277.8" y="290" width="1.8" height="256" fill="#2a2a2a"/>
<rect x="766.8" y="289.5" width="2.4" height="256" fill="#000"/>
<rect x="767" y="544" width="511.7" height="2.1" fill="#000"/>
<rect x="764" y="545.5" width="3" height="1" fill="#555"/>
<text x="761.5" y="550.0" text-anchor="end" font-size="11" font-family="Liberation Sans, sans-serif" fill="#111" stroke="#111" stroke-width="0.15">-0.2</text>
<rect x="764" y="528.4" width="3" height="1" fill="#555"/>
<text x="761.5" y="532.9" text-anchor="end" font-size="11" font-family="Liberation Sans, sans-serif" fill="#111" stroke="#111" stroke-width="0.15">0</text>
<rect x="764" y="511.3" width="3" height="1" fill="#555"/>
<text x="761.5" y="515.8" text-anchor="end" font-size="11" font-family="Liberation Sans, sans-serif" fill="#111" stroke="#111" stroke-width="0.15">0.2</text>
<rect x="764" y="494.3" width="3" height="1" fill="#555"/>
<text x="761.5" y="498.8" text-anchor="end" font-size="11" font-family="Liberation Sans, sans-serif" fill="#111" stroke="#111" stroke-width="0.15">0.4</text>
<rect x="764" y="477.2" width="3" height="1" fill="#555"/>
<text x="761.5" y="481.7" text-anchor="end" font-size="11" font-family="Liberation Sans, sans-serif" fill="#111" stroke="#111" stroke-width="0.15">0.6</text>
<rect x="764" y="460.2" width="3" height="1" fill="#555"/>
<text x="761.5" y="464.7" text-anchor="end" font-size="11" font-family="Liberation Sans, sans-serif" fill="#111" stroke="#111" stroke-width="0.15">0.8</text>
<rect x="764" y="443.1" width="3" height="1" fill="#555"/>
<text x="761.5" y="447.6" text-anchor="end" font-size="11" font-family="Liberation Sans, sans-serif" fill="#111" stroke="#111" stroke-width="0.15">1</text>
<rect x="764" y="426.0" width="3" height="1" fill="#555"/>
<text x="761.5" y="430.5" text-anchor="end" font-size="11" font-family="Liberation Sans, sans-serif" fill="#111" stroke="#111" stroke-width="0.15">1.2</text>
<rect x="764" y="409.0" width="3" height="1" fill="#555"/>
<text x="761.5" y="413.5" text-anchor="end" font-size="11" font-family="Liberation Sans, sans-serif" fill="#111" stroke="#111" stroke-width="0.15">1.4</text>
<rect x="764" y="391.9" width="3" height="1" fill="#555"/>
<text x="761.5" y="396.4" text-anchor="end" font-size="11" font-family="Liberation Sans, sans-serif" fill="#111" stroke="#111" stroke-width="0.15">1.6</text>
<rect x="764" y="374.9" width="3" height="1" fill="#555"/>
<text x="761.5" y="379.4" text-anchor="end" font-size="11" font-family="Liberation Sans, sans-serif" fill="#111" stroke="#111" stroke-width="0.15">1.8</text>
<rect x="764" y="357.8" width="3" height="1" fill="#555"/>
<text x="761.5" y="362.3" text-anchor="end" font-size="11" font-family="Liberation Sans, sans-serif" fill="#111" stroke="#111" stroke-width="0.15">2</text>
<rect x="764" y="340.7" width="3" height="1" fill="#555"/>
<text x="761.5" y="345.2" text-anchor="end" font-size="11" font-family="Liberation Sans, sans-serif" fill="#111" stroke="#111" stroke-width="0.15">2.2</text>
<rect x="764" y="323.7" width="3" height="1" fill="#555"/>
<text x="761.5" y="328.2" text-anchor="end" font-size="11" font-family="Liberation Sans, sans-serif" fill="#111" stroke="#111" stroke-width="0.15">2.4</text>
<rect x="764" y="306.6" width="3" height="1" fill="#555"/>
<text x="761.5" y="311.1" text-anchor="end" font-size="11" font-family="Liberation Sans, sans-serif" fill="#111" stroke="#111" stroke-width="0.15">2.6</text>
<rect x="775.4" y="546" width="1" height="2" fill="#777"/>
<rect x="788.1" y="546" width="1" height="2" fill="#777"/>
<rect x="800.8" y="546" width="1" height="2" fill="#777"/>
<rect x="813.5" y="546" width="1" height="2" fill="#777"/>
<rect x="826.2" y="546" width="1" height="2" fill="#777"/>
<rect x="838.9" y="546" width="1" height="2" fill="#777"/>
<rect x="851.6" y="546" width="1" height="2" fill="#777"/>
<rect x="864.3" y="546" width="1" height="2" fill="#777"/>
<rect x="877.0" y="546" width="1" height="2" fill="#777"/>
<rect x="889.7" y="546" width="1" height="2" fill="#777"/>
<rect x="902.4" y="546" width="1" height="2" fill="#777"/>
<rect x="915.1" y="546" width="1" height="2" fill="#777"/>
<rect x="927.8" y="546" width="1" height="2" fill="#777"/>
<rect x="940.4" y="546" width="1" height="2" fill="#777"/>
<rect x="953.1" y="546" width="1" height="2" fill="#777"/>
<rect x="965.8" y="546" width="1" height="2" fill="#777"/>
<rect x="978.5" y="546" width="1" height="2" fill="#777"/>
<rect x="991.2" y="546" width="1" height="2" fill="#777"/>
<rect x="1003.9" y="546" width="1" height="2" fill="#777"/>
<rect x="1016.6" y="546" width="1" height="2" fill="#777"/>
<rect x="1029.3" y="546" width="1" height="2" fill="#777"/>
<rect x="1042.0" y="546" width="1" height="2" fill="#777"/>
<rect x="1054.7" y="546" width="1" height="2" fill="#777"/>
<rect x="1067.4" y="546" width="1" height="2" fill="#777"/>
<rect x="1080.1" y="546" width="1" height="2" fill="#777"/>
<rect x="1092.8" y="546" width="1" height="2" fill="#777"/>
<rect x="1105.5" y="546" width="1" height="2" fill="#777"/>
<rect x="1118.2" y="546" width="1" height="2" fill="#777"/>
<rect x="1130.9" y="546" width="1" height="2" fill="#777"/>
<rect x="1143.6" y="546" width="1" height="2" fill="#777"/>
<rect x="1156.2" y="546" width="1" height="2" fill="#777"/>
<rect x="1168.9" y="546" width="1" height="2" fill="#777"/>
<rect x="1181.6" y="546" width="1" height="2" fill="#777"/>
<rect x="1194.3" y="546" width="1" height="2" fill="#777"/>
<rect x="1207.0" y="546" width="1" height="2" fill="#777"/>
<rect x="1219.7" y="546" width="1" height="2" fill="#777"/>
<rect x="1232.4" y="546" width="1" height="2" fill="#777"/>
<rect x="1245.1" y="546" width="1" height="2" fill="#777"/>
<rect x="1257.8" y="546" width="1" height="2" fill="#777"/>
<rect x="1270.5" y="546" width="1" height="2" fill="#777"/>
<text x="804.5" y="562.2" font-size="11" textLength="17" lengthAdjust="spacingAndGlyphs" font-family="Liberation Sans, sans-serif" fill="#111" stroke="#111" stroke-width="0.15">100</text>
<text x="855.3" y="562.2" font-size="11" textLength="17" lengthAdjust="spacingAndGlyphs" font-family="Liberation Sans, sans-serif" fill="#111" stroke="#111" stroke-width="0.15">150</text>
<text x="906.1" y="562.2" font-size="11" textLength="17" lengthAdjust="spacingAndGlyphs" font-family="Liberation Sans, sans-serif" fill="#111" stroke="#111" stroke-width="0.15">200</text>
<text x="956.8" y="562.2" font-size="11" textLength="17" lengthAdjust="spacingAndGlyphs" font-family="Liberation Sans, sans-serif" fill="#111" stroke="#111" stroke-width="0.15">250</text>
<text x="1007.6" y="562.2" font-size="11" textLength="17" lengthAdjust="spacingAndGlyphs" font-family="Liberation Sans, sans-serif" fill="#111" stroke="#111" stroke-width="0.15">300</text>
<text x="1058.4" y="562.2" font-size="11" textLength="17" lengthAdjust="spacingAndGlyphs" font-family="Liberation Sans, sans-serif" fill="#111" stroke="#111" stroke-width="0.15">350</text>
<text x="1109.2" y="562.2" font-size="11" textLength="17" lengthAdjust="spacingAndGlyphs" font-family="Liberation Sans, sans-serif" fill="#111" stroke="#111" stroke-width="0.15">400</text>
<text x="1159.9" y="562.2" font-size="11" textLength="17" lengthAdjust="spacingAndGlyphs" font-family="Liberation Sans, sans-serif" fill="#111" stroke="#111" stroke-width="0.15">450</text>
<text x="1210.7" y="562.2" font-size="11" textLength="17" lengthAdjust="spacingAndGlyphs" font-family="Liberation Sans, sans-serif" fill="#111" stroke="#111" stroke-width="0.15">500</text>
<text x="1261.5" y="562.2" font-size="11" textLength="17" lengthAdjust="spacingAndGlyphs" font-family="Liberation Sans, sans-serif" fill="#111" stroke="#111" stroke-width="0.15">550</text>
<text x="1022.4" y="571.8" text-anchor="middle" font-size="11" font-family="Liberation Sans, sans-serif" fill="#111" stroke="#111" stroke-width="0.15">Size (bps)</text>
<text transform="translate(739.5,417.5) rotate(-90)" text-anchor="middle" font-size="11" font-family="Liberation Sans, sans-serif" fill="#111" stroke="#111" stroke-width="0.15">Peak Ratio</text>
<rect x="840.5" y="417" width="365" height="2" fill="#5e9c8c"/>
<rect x="840.5" y="464" width="365" height="2" fill="#5e9c8c"/>
<rect x="838.5" y="429.2" width="4" height="4" fill="#1ea01e" stroke="#002a00" stroke-width="1.3"/>
<rect x="839.8" y="430.5" width="1.4" height="1.4" fill="#90ff90"/>
<rect x="848.5" y="443.0" width="4" height="4" fill="#1ea01e" stroke="#002a00" stroke-width="1.3"/>
<rect x="849.8" y="444.3" width="1.4" height="1.4" fill="#90ff90"/>
<rect x="856.7" y="448.0" width="4" height="4" fill="#1ea01e" stroke="#002a00" stroke-width="1.3"/>
<rect x="858.0" y="449.3" width="1.4" height="1.4" fill="#90ff90"/>
<rect x="866.3" y="444.0" width="4" height="4" fill="#1ea01e" stroke="#002a00" stroke-width="1.3"/>
<rect x="867.6" y="445.3" width="1.4" height="1.4" fill="#90ff90"/>
<rect x="874.3" y="439.2" width="4" height="4" fill="#1ea01e" stroke="#002a00" stroke-width="1.3"/>
<rect x="875.6" y="440.5" width="1.4" height="1.4" fill="#90ff90"/>
<rect x="882.2" y="444.0" width="4" height="4" fill="#1ea01e" stroke="#002a00" stroke-width="1.3"/>
<rect x="883.5" y="445.3" width="1.4" height="1.4" fill="#90ff90"/>
<rect x="892.2" y="441.3" width="4" height="4" fill="#1ea01e" stroke="#002a00" stroke-width="1.3"/>
<rect x="893.5" y="442.6" width="1.4" height="1.4" fill="#90ff90"/>
<rect x="899.2" y="440.2" width="4" height="4" fill="#1ea01e" stroke="#002a00" stroke-width="1.3"/>
<rect x="900.5" y="441.5" width="1.4" height="1.4" fill="#90ff90"/>
<rect x="907.2" y="444.2" width="4" height="4" fill="#1ea01e" stroke="#002a00" stroke-width="1.3"/>
<rect x="908.5" y="445.5" width="1.4" height="1.4" fill="#90ff90"/>
<rect x="917.2" y="441.2" width="4" height="4" fill="#1ea01e" stroke="#002a00" stroke-width="1.3"/>
<rect x="918.5" y="442.5" width="1.4" height="1.4" fill="#90ff90"/>
<rect x="931.8" y="433.3" width="4" height="4" fill="#1ea01e" stroke="#002a00" stroke-width="1.3"/>
<rect x="933.1" y="434.6" width="1.4" height="1.4" fill="#90ff90"/>
<rect x="940.0" y="438.3" width="4" height="4" fill="#1ea01e" stroke="#002a00" stroke-width="1.3"/>
<rect x="941.3" y="439.6" width="1.4" height="1.4" fill="#90ff90"/>
<rect x="951.7" y="435.0" width="4" height="4" fill="#1ea01e" stroke="#002a00" stroke-width="1.3"/>
<rect x="953.0" y="436.3" width="1.4" height="1.4" fill="#90ff90"/>
<rect x="968.0" y="456.0" width="4" height="4" fill="#1ea01e" stroke="#002a00" stroke-width="1.3"/>
<rect x="969.3" y="457.3" width="1.4" height="1.4" fill="#90ff90"/>
<rect x="974.3" y="445.2" width="4" height="4" fill="#1ea01e" stroke="#002a00" stroke-width="1.3"/>
<rect x="975.6" y="446.5" width="1.4" height="1.4" fill="#90ff90"/>
<rect x="981.7" y="440.2" width="4" height="4" fill="#1ea01e" stroke="#002a00" stroke-width="1.3"/>
<rect x="983.0" y="441.5" width="1.4" height="1.4" fill="#90ff90"/>
<rect x="989.3" y="429.2" width="4" height="4" fill="#1ea01e" stroke="#002a00" stroke-width="1.3"/>
<rect x="990.6" y="430.5" width="1.4" height="1.4" fill="#90ff90"/>
<rect x="1004.7" y="436.0" width="4" height="4" fill="#1ea01e" stroke="#002a00" stroke-width="1.3"/>
<rect x="1006.0" y="437.3" width="1.4" height="1.4" fill="#90ff90"/>
<rect x="1013.3" y="435.2" width="4" height="4" fill="#1ea01e" stroke="#002a00" stroke-width="1.3"/>
<rect x="1014.6" y="436.5" width="1.4" height="1.4" fill="#90ff90"/>
<rect x="1021.3" y="434.2" width="4" height="4" fill="#1ea01e" stroke="#002a00" stroke-width="1.3"/>
<rect x="1022.6" y="435.5" width="1.4" height="1.4" fill="#90ff90"/>
<rect x="1037.2" y="442.2" width="4" height="4" fill="#1ea01e" stroke="#002a00" stroke-width="1.3"/>
<rect x="1038.5" y="443.5" width="1.4" height="1.4" fill="#90ff90"/>
<rect x="1044.2" y="438.8" width="4" height="4" fill="#1ea01e" stroke="#002a00" stroke-width="1.3"/>
<rect x="1045.5" y="440.1" width="1.4" height="1.4" fill="#90ff90"/>
<rect x="1055.2" y="434.2" width="4" height="4" fill="#1ea01e" stroke="#002a00" stroke-width="1.3"/>
<rect x="1056.5" y="435.5" width="1.4" height="1.4" fill="#90ff90"/>
<rect x="1075.8" y="449.2" width="4" height="4" fill="#1ea01e" stroke="#002a00" stroke-width="1.3"/>
<rect x="1077.1" y="450.5" width="1.4" height="1.4" fill="#90ff90"/>
<rect x="1084.7" y="448.0" width="4" height="4" fill="#1ea01e" stroke="#002a00" stroke-width="1.3"/>
<rect x="1086.0" y="449.3" width="1.4" height="1.4" fill="#90ff90"/>
<rect x="1093.0" y="440.0" width="4" height="4" fill="#1ea01e" stroke="#002a00" stroke-width="1.3"/>
<rect x="1094.3" y="441.3" width="1.4" height="1.4" fill="#90ff90"/>
<rect x="1100.8" y="447.2" width="4" height="4" fill="#1ea01e" stroke="#002a00" stroke-width="1.3"/>
<rect x="1102.1" y="448.5" width="1.4" height="1.4" fill="#90ff90"/>
<rect x="1109.7" y="440.0" width="4" height="4" fill="#1ea01e" stroke="#002a00" stroke-width="1.3"/>
<rect x="1111.0" y="441.3" width="1.4" height="1.4" fill="#90ff90"/>
<rect x="1117.5" y="453.0" width="4" height="4" fill="#1ea01e" stroke="#002a00" stroke-width="1.3"/>
<rect x="1118.8" y="454.3" width="1.4" height="1.4" fill="#90ff90"/>
<rect x="1124.7" y="441.3" width="4" height="4" fill="#1ea01e" stroke="#002a00" stroke-width="1.3"/>
<rect x="1126.0" y="442.6" width="1.4" height="1.4" fill="#90ff90"/>
<rect x="1132.3" y="435.2" width="4" height="4" fill="#1ea01e" stroke="#002a00" stroke-width="1.3"/>
<rect x="1133.6" y="436.5" width="1.4" height="1.4" fill="#90ff90"/>
<rect x="1140.5" y="427.2" width="4" height="4" fill="#1ea01e" stroke="#002a00" stroke-width="1.3"/>
<rect x="1141.8" y="428.5" width="1.4" height="1.4" fill="#90ff90"/>
<rect x="1148.5" y="451.3" width="4" height="4" fill="#1ea01e" stroke="#002a00" stroke-width="1.3"/>
<rect x="1149.8" y="452.6" width="1.4" height="1.4" fill="#90ff90"/>
<rect x="1157.5" y="437.2" width="4" height="4" fill="#1ea01e" stroke="#002a00" stroke-width="1.3"/>
<rect x="1158.8" y="438.5" width="1.4" height="1.4" fill="#90ff90"/>
<rect x="1165.2" y="441.3" width="4" height="4" fill="#1ea01e" stroke="#002a00" stroke-width="1.3"/>
<rect x="1166.5" y="442.6" width="1.4" height="1.4" fill="#90ff90"/>
<rect x="1174.2" y="456.3" width="4" height="4" fill="#1ea01e" stroke="#002a00" stroke-width="1.3"/>
<rect x="1175.5" y="457.6" width="1.4" height="1.4" fill="#90ff90"/>
<rect x="1180.2" y="443.0" width="4" height="4" fill="#1ea01e" stroke="#002a00" stroke-width="1.3"/>
<rect x="1181.5" y="444.3" width="1.4" height="1.4" fill="#90ff90"/>
<rect x="1190.2" y="430.2" width="4" height="4" fill="#1ea01e" stroke="#002a00" stroke-width="1.3"/>
<rect x="1191.5" y="431.5" width="1.4" height="1.4" fill="#90ff90"/>
<rect x="1196.8" y="447.2" width="4" height="4" fill="#1ea01e" stroke="#002a00" stroke-width="1.3"/>
<rect x="1198.1" y="448.5" width="1.4" height="1.4" fill="#90ff90"/>
<rect x="1204.3" y="428.0" width="4" height="4" fill="#1ea01e" stroke="#002a00" stroke-width="1.3"/>
<rect x="1205.6" y="429.3" width="1.4" height="1.4" fill="#90ff90"/>
<rect x="923.8" y="486.8" width="4" height="4" fill="#8a1020" stroke="#1a0008" stroke-width="1.3"/>
<rect x="925.1" y="488.1" width="1.4" height="1.4" fill="#b83848"/>
<rect x="959.7" y="484.2" width="4" height="4" fill="#e0e060" stroke="#1a1a00" stroke-width="1.3"/>
<rect x="961.0" y="485.5" width="1.4" height="1.4" fill="#ffffb0"/>
<rect x="997.2" y="493.0" width="4" height="4" fill="#8a1020" stroke="#1a0008" stroke-width="1.3"/>
<rect x="998.5" y="494.3" width="1.4" height="1.4" fill="#b83848"/>
<rect x="1030.2" y="478.0" width="4" height="4" fill="#8a1020" stroke="#1a0008" stroke-width="1.3"/>
<rect x="1031.5" y="479.3" width="1.4" height="1.4" fill="#b83848"/>
<rect x="1069.7" y="479.2" width="4" height="4" fill="#8a1020" stroke="#1a0008" stroke-width="1.3"/>
<rect x="1071.0" y="480.5" width="1.4" height="1.4" fill="#b83848"/>
<path d="M1266.1,542.2 L1275.7,532.8 L1275.7,542.2 Z" fill="#228a22" stroke="#000" stroke-width="1.1" stroke-linejoin="miter"/>
</svg>
</body></html>
